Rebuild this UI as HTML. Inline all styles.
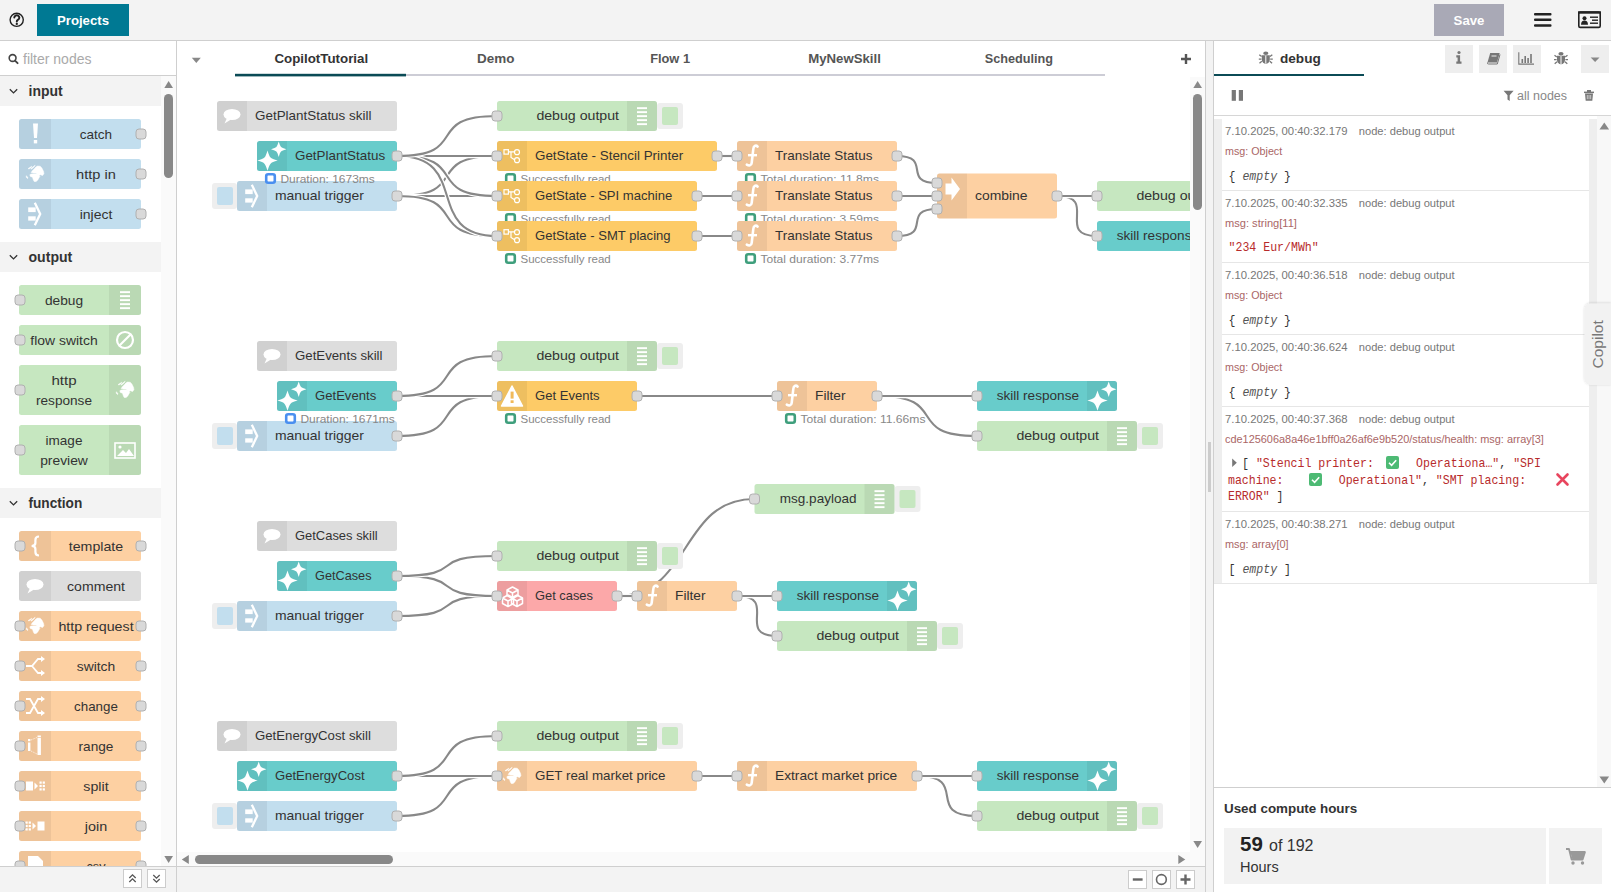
<!DOCTYPE html><html><head><meta charset="utf-8"><title>Flow editor</title><style>html,body{margin:0;padding:0;background:#fff;overflow:hidden}svg text{font-family:'Liberation Sans', sans-serif}</style></head><body>
<svg width="1611" height="892" viewBox="0 0 1611 892" style="display:block">
<rect x="0" y="0" width="1611" height="40" fill="#f3f3f3"/>
<rect x="0" y="40" width="1611" height="1" fill="#cfcfcf"/>
<circle cx="16.7" cy="19.8" r="6.6" fill="none" stroke="#222" stroke-width="1.4"/>
<path d="M14.3,17.6 a2.5,2.4 0 1 1 3.8,2.1 c-0.9,0.5 -1.3,0.9 -1.3,1.7" fill="none" stroke="#222" stroke-width="2" stroke-linecap="round"/><circle cx="16.8" cy="23.9" r="1.15" fill="#222"/>
<rect x="37" y="4" width="92" height="32" fill="#007993"/>
<text x="83" y="25" text-anchor="middle" font-size="13.2" font-weight="bold" fill="#fff"{TLW(51)}>Projects</text>
<rect x="1434" y="4" width="70" height="32" fill="#a9a9b6"/>
<text x="1469" y="25" text-anchor="middle" font-size="13.2" font-weight="bold" fill="#fff"{TLW(30.5)}>Save</text>
<rect x="1534" y="13" width="17.5" height="2.6" rx="1" fill="#222"/><rect x="1534" y="18.5" width="17.5" height="2.6" rx="1" fill="#222"/><rect x="1534" y="24.2" width="17.5" height="2.6" rx="1" fill="#222"/>
<rect x="1578.8" y="12" width="21.4" height="15.4" rx="1.5" fill="none" stroke="#222" stroke-width="1.6"/><rect x="1578" y="11.3" width="23" height="2.4" fill="#222"/>
<circle cx="1584.5" cy="18.3" r="2" fill="#222"/><path d="M1581,24.8 q0.2,-4.2 3.5,-4.2 q3.3,0 3.5,4.2z" fill="#222"/>
<rect x="1590" y="16.5" width="8" height="1.4" fill="#222"/><rect x="1592" y="19.5" width="6" height="1.4" fill="#222"/><rect x="1590" y="22.5" width="8" height="1.4" fill="#222"/>
<rect x="0" y="41" width="176" height="825" fill="#fff"/>
<rect x="0" y="75" width="176" height="1" fill="#cfcfcf"/>
<circle cx="12.6" cy="58" r="3.4" fill="none" stroke="#444" stroke-width="1.6"/><path d="M15,60.6 l2.6,2.6" stroke="#444" stroke-width="1.9" stroke-linecap="round"/>
<text x="23" y="64" font-size="14" fill="#aaaaaa">filter nodes</text>
<rect x="161" y="76" width="15" height="790" fill="#fafafa"/>
<path d="M164.3,88 l4.35,-7 l4.35,7z" fill="#888"/>
<rect x="164" y="94" width="9" height="84" rx="4.5" fill="#888"/>
<path d="M164.3,856 l4.35,7 l4.35,-7z" fill="#888"/>
<rect x="176" y="41" width="1" height="851" fill="#cfcfcf"/>
<rect x="0" y="76" width="161" height="30" fill="#f3f3f3"/>
<path d="M9.8,89.2 l3.7,3.7 l3.7,-3.7" fill="none" stroke="#333" stroke-width="1.3"/>
<text x="28.5" y="96" font-size="14" font-weight="bold" fill="#333" textLength="34.1" lengthAdjust="spacingAndGlyphs">input</text>
<rect x="0" y="242" width="161" height="30" fill="#f3f3f3"/>
<path d="M9.8,255.2 l3.7,3.7 l3.7,-3.7" fill="none" stroke="#333" stroke-width="1.3"/>
<text x="28.5" y="262" font-size="14" font-weight="bold" fill="#333" textLength="43.8" lengthAdjust="spacingAndGlyphs">output</text>
<rect x="0" y="488" width="161" height="30" fill="#f3f3f3"/>
<path d="M9.8,501.2 l3.7,3.7 l3.7,-3.7" fill="none" stroke="#333" stroke-width="1.3"/>
<text x="28.5" y="508" font-size="14" font-weight="bold" fill="#333" textLength="53.8" lengthAdjust="spacingAndGlyphs">function</text>
<svg x="0" y="76" width="161" height="790" overflow="hidden"><g transform="translate(0,-76)">
<rect x="19" y="119" width="122" height="30" rx="2.5" fill="#c2deee"/><path d="M51,119 h-29.5 a2.5,2.5 0 0 0 -2.5,2.5 v25 a2.5,2.5 0 0 0 2.5,2.5 h29.5 z" fill="#000" fill-opacity="0.06"/><svg x="20.0" y="119" width="30" height="30" overflow="hidden"><path d="M13,4.5 h5 l-1,14.5 h-3z" fill="#fff"/><rect x="13.8" y="21.0" width="3.4" height="3.4" fill="#fff"/></svg><text x="96.0" y="139.0" text-anchor="middle" font-size="13.6" fill="#333" textLength="32.3" lengthAdjust="spacingAndGlyphs">catch</text><rect x="136" y="129.0" width="10" height="10" rx="3" fill="#d9d9d9" stroke="#b0b0b0" stroke-width="1"/>
<rect x="19" y="159" width="122" height="30" rx="2.5" fill="#c2deee"/><path d="M51,159 h-29.5 a2.5,2.5 0 0 0 -2.5,2.5 v25 a2.5,2.5 0 0 0 2.5,2.5 h29.5 z" fill="#000" fill-opacity="0.06"/><svg x="20.0" y="159" width="30" height="30" overflow="hidden"><path transform="translate(0,0.0)" d="M11.1,13.5 L12.5,11.5 L14.1,10.1 L15.8,8.1 L17.5,7.1 L20.2,7.2 L21.9,9.1 L23.6,12.5 L23.9,14.8 L22.6,16.5 L20.2,15.8 L18.9,16.8 L17.5,15.2 L15.8,14.1 L13.5,14.1 Z M9.8,15.8 L11.1,15 L16.2,14.8 L18.2,15.8 L19.9,17.5 L18.9,18.9 L17.8,20.9 L16.2,22.6 L14.1,22.4 L13.1,20.2 L12.5,18.2 L10.4,17.5 Z M8.1,9.6 L11.8,7.2 L11,8.6 L9,10 Z M10.8,9.6 L15.2,6.2 L14,8 L11.6,10 Z M6.2,16.8 L7.8,18.2 L7.6,19.6 L6.4,18.4 Z" fill="#fff" stroke="#fff" stroke-width="0.5" stroke-linejoin="round"/></svg><text x="96.0" y="179.0" text-anchor="middle" font-size="13.6" fill="#333" textLength="39.8" lengthAdjust="spacingAndGlyphs">http in</text><rect x="136" y="169.0" width="10" height="10" rx="3" fill="#d9d9d9" stroke="#b0b0b0" stroke-width="1"/>
<rect x="19" y="199" width="122" height="30" rx="2.5" fill="#c2deee"/><path d="M51,199 h-29.5 a2.5,2.5 0 0 0 -2.5,2.5 v25 a2.5,2.5 0 0 0 2.5,2.5 h29.5 z" fill="#000" fill-opacity="0.06"/><svg x="20.0" y="199" width="30" height="30" overflow="hidden"><rect x="8.2" y="8.4" width="7.5" height="4.7" fill="#fff"/><rect x="8.2" y="17.3" width="7.5" height="4.3" fill="#fff"/><path d="M14.8,3.8 L20.2,15.0 L14.8,26.2" fill="none" stroke="#fff" stroke-width="2.3" stroke-linejoin="miter"/></svg><text x="96.0" y="219.0" text-anchor="middle" font-size="13.6" fill="#333" textLength="32.7" lengthAdjust="spacingAndGlyphs">inject</text><rect x="136" y="209.0" width="10" height="10" rx="3" fill="#d9d9d9" stroke="#b0b0b0" stroke-width="1"/>
<rect x="19" y="285" width="122" height="30" rx="2.5" fill="#c6e7c0"/><path d="M109,285 h29.5 a2.5,2.5 0 0 1 2.5,2.5 v25 a2.5,2.5 0 0 1 -2.5,2.5 h-29.5 z" fill="#000" fill-opacity="0.06"/><svg x="110.0" y="285" width="30" height="30" overflow="hidden"><rect x="10" y="6.2" width="10" height="1.9" fill="#fff"/><rect x="10" y="10.2" width="10" height="1.9" fill="#fff"/><rect x="10" y="14.2" width="10" height="1.9" fill="#fff"/><rect x="10" y="18.2" width="10" height="1.9" fill="#fff"/><rect x="10" y="22.2" width="10" height="1.9" fill="#fff"/></svg><text x="64.0" y="305.0" text-anchor="middle" font-size="13.6" fill="#333" textLength="38.2" lengthAdjust="spacingAndGlyphs">debug</text><rect x="15" y="295.0" width="10" height="10" rx="3" fill="#d9d9d9" stroke="#b0b0b0" stroke-width="1"/>
<rect x="19" y="325" width="122" height="30" rx="2.5" fill="#c6e7c0"/><path d="M109,325 h29.5 a2.5,2.5 0 0 1 2.5,2.5 v25 a2.5,2.5 0 0 1 -2.5,2.5 h-29.5 z" fill="#000" fill-opacity="0.06"/><svg x="110.0" y="325" width="30" height="30" overflow="hidden"><circle cx="15" cy="15.0" r="8" fill="none" stroke="#fff" stroke-width="2.2"/><path d="M9.5,20.5 L20.5,9.5" stroke="#fff" stroke-width="2.2"/></svg><text x="64.0" y="345.0" text-anchor="middle" font-size="13.6" fill="#333" textLength="67.3" lengthAdjust="spacingAndGlyphs">flow switch</text><rect x="15" y="335.0" width="10" height="10" rx="3" fill="#d9d9d9" stroke="#b0b0b0" stroke-width="1"/>
<rect x="19" y="365" width="122" height="50" rx="2.5" fill="#c6e7c0"/><path d="M109,365 h29.5 a2.5,2.5 0 0 1 2.5,2.5 v45 a2.5,2.5 0 0 1 -2.5,2.5 h-29.5 z" fill="#000" fill-opacity="0.06"/><svg x="110.0" y="365" width="30" height="50" overflow="hidden"><path transform="translate(0,10.0)" d="M11.1,13.5 L12.5,11.5 L14.1,10.1 L15.8,8.1 L17.5,7.1 L20.2,7.2 L21.9,9.1 L23.6,12.5 L23.9,14.8 L22.6,16.5 L20.2,15.8 L18.9,16.8 L17.5,15.2 L15.8,14.1 L13.5,14.1 Z M9.8,15.8 L11.1,15 L16.2,14.8 L18.2,15.8 L19.9,17.5 L18.9,18.9 L17.8,20.9 L16.2,22.6 L14.1,22.4 L13.1,20.2 L12.5,18.2 L10.4,17.5 Z M8.1,9.6 L11.8,7.2 L11,8.6 L9,10 Z M10.8,9.6 L15.2,6.2 L14,8 L11.6,10 Z M6.2,16.8 L7.8,18.2 L7.6,19.6 L6.4,18.4 Z" fill="#fff" stroke="#fff" stroke-width="0.5" stroke-linejoin="round"/></svg><text x="64.0" y="385.0" text-anchor="middle" font-size="13.6" fill="#333" textLength="25.2" lengthAdjust="spacingAndGlyphs">http</text><text x="64.0" y="405.0" text-anchor="middle" font-size="13.6" fill="#333" textLength="56.0" lengthAdjust="spacingAndGlyphs">response</text><rect x="15" y="385.0" width="10" height="10" rx="3" fill="#d9d9d9" stroke="#b0b0b0" stroke-width="1"/>
<rect x="19" y="425" width="122" height="50" rx="2.5" fill="#c6e7c0"/><path d="M109,425 h29.5 a2.5,2.5 0 0 1 2.5,2.5 v45 a2.5,2.5 0 0 1 -2.5,2.5 h-29.5 z" fill="#000" fill-opacity="0.06"/><svg x="110.0" y="425" width="30" height="50" overflow="hidden"><rect x="5" y="18.0" width="20" height="15" fill="none" stroke="#fff" stroke-width="1.6"/><path d="M7,31.0 l6,-6 l3,3 l3,-4 l5,7z" fill="#fff"/><circle cx="10" cy="22.0" r="1.6" fill="#fff"/></svg><text x="64.0" y="445.0" text-anchor="middle" font-size="13.6" fill="#333" textLength="36.9" lengthAdjust="spacingAndGlyphs">image</text><text x="64.0" y="465.0" text-anchor="middle" font-size="13.6" fill="#333" textLength="47.7" lengthAdjust="spacingAndGlyphs">preview</text><rect x="15" y="445.0" width="10" height="10" rx="3" fill="#d9d9d9" stroke="#b0b0b0" stroke-width="1"/>
<rect x="19" y="531" width="122" height="30" rx="2.5" fill="#fdd0a2"/><path d="M51,531 h-29.5 a2.5,2.5 0 0 0 -2.5,2.5 v25 a2.5,2.5 0 0 0 2.5,2.5 h29.5 z" fill="#000" fill-opacity="0.06"/><svg x="20.0" y="531" width="30" height="30" overflow="hidden"><path d="M19,5.5 q-3.6,0 -3.6,3.4 v3.2 q0,2.9 -3.8,2.9 q3.8,0 3.8,2.9 v3.2 q0,3.4 3.6,3.4" fill="none" stroke="#fff" stroke-width="2.2"/></svg><text x="96.0" y="551.0" text-anchor="middle" font-size="13.6" fill="#333" textLength="54.4" lengthAdjust="spacingAndGlyphs">template</text><rect x="15" y="541.0" width="10" height="10" rx="3" fill="#d9d9d9" stroke="#b0b0b0" stroke-width="1"/><rect x="136" y="541.0" width="10" height="10" rx="3" fill="#d9d9d9" stroke="#b0b0b0" stroke-width="1"/>
<rect x="19" y="571" width="122" height="30" rx="2.5" fill="#dddddd"/><path d="M51,571 h-29.5 a2.5,2.5 0 0 0 -2.5,2.5 v25 a2.5,2.5 0 0 0 2.5,2.5 h29.5 z" fill="#000" fill-opacity="0.06"/><svg x="20.0" y="571" width="30" height="30" overflow="hidden"><ellipse cx="15" cy="13.5" rx="8.5" ry="5.5" fill="#fff"/><path d="M10,17.0 L7.5,22.5 L14,18.5 z" fill="#fff"/></svg><text x="96.0" y="591.0" text-anchor="middle" font-size="13.6" fill="#333" textLength="58.0" lengthAdjust="spacingAndGlyphs">comment</text>
<rect x="19" y="611" width="122" height="30" rx="2.5" fill="#fdd0a2"/><path d="M51,611 h-29.5 a2.5,2.5 0 0 0 -2.5,2.5 v25 a2.5,2.5 0 0 0 2.5,2.5 h29.5 z" fill="#000" fill-opacity="0.06"/><svg x="20.0" y="611" width="30" height="30" overflow="hidden"><path transform="translate(0,0.0)" d="M11.1,13.5 L12.5,11.5 L14.1,10.1 L15.8,8.1 L17.5,7.1 L20.2,7.2 L21.9,9.1 L23.6,12.5 L23.9,14.8 L22.6,16.5 L20.2,15.8 L18.9,16.8 L17.5,15.2 L15.8,14.1 L13.5,14.1 Z M9.8,15.8 L11.1,15 L16.2,14.8 L18.2,15.8 L19.9,17.5 L18.9,18.9 L17.8,20.9 L16.2,22.6 L14.1,22.4 L13.1,20.2 L12.5,18.2 L10.4,17.5 Z M8.1,9.6 L11.8,7.2 L11,8.6 L9,10 Z M10.8,9.6 L15.2,6.2 L14,8 L11.6,10 Z M6.2,16.8 L7.8,18.2 L7.6,19.6 L6.4,18.4 Z" fill="#fff" stroke="#fff" stroke-width="0.5" stroke-linejoin="round"/></svg><text x="96.0" y="631.0" text-anchor="middle" font-size="13.6" fill="#333" textLength="75.2" lengthAdjust="spacingAndGlyphs">http request</text><rect x="15" y="621.0" width="10" height="10" rx="3" fill="#d9d9d9" stroke="#b0b0b0" stroke-width="1"/><rect x="136" y="621.0" width="10" height="10" rx="3" fill="#d9d9d9" stroke="#b0b0b0" stroke-width="1"/>
<rect x="19" y="651" width="122" height="30" rx="2.5" fill="#fdd0a2"/><path d="M51,651 h-29.5 a2.5,2.5 0 0 0 -2.5,2.5 v25 a2.5,2.5 0 0 0 2.5,2.5 h29.5 z" fill="#000" fill-opacity="0.06"/><svg x="20.0" y="651" width="30" height="30" overflow="hidden"><g fill="none" stroke="#fff" stroke-width="1.8"><path d="M6,15.0 h6 l6,-7 h3 M12,15.0 l6,7 h3"/></g><path d="M21,5.0 l4,3 l-4,3z M21,19.0 l4,3 l-4,3z" fill="#fff"/></svg><text x="96.0" y="671.0" text-anchor="middle" font-size="13.6" fill="#333" textLength="38.4" lengthAdjust="spacingAndGlyphs">switch</text><rect x="15" y="661.0" width="10" height="10" rx="3" fill="#d9d9d9" stroke="#b0b0b0" stroke-width="1"/><rect x="136" y="661.0" width="10" height="10" rx="3" fill="#d9d9d9" stroke="#b0b0b0" stroke-width="1"/>
<rect x="19" y="691" width="122" height="30" rx="2.5" fill="#fdd0a2"/><path d="M51,691 h-29.5 a2.5,2.5 0 0 0 -2.5,2.5 v25 a2.5,2.5 0 0 0 2.5,2.5 h29.5 z" fill="#000" fill-opacity="0.06"/><svg x="20.0" y="691" width="30" height="30" overflow="hidden"><g fill="none" stroke="#fff" stroke-width="1.8"><path d="M6,8.0 h4 l8,14 h4 M6,22.0 h4 l8,-14 h4"/></g><path d="M21,5.0 l4,3 l-4,3z M21,19.0 l4,3 l-4,3z" fill="#fff"/></svg><text x="96.0" y="711.0" text-anchor="middle" font-size="13.6" fill="#333" textLength="43.8" lengthAdjust="spacingAndGlyphs">change</text><rect x="15" y="701.0" width="10" height="10" rx="3" fill="#d9d9d9" stroke="#b0b0b0" stroke-width="1"/><rect x="136" y="701.0" width="10" height="10" rx="3" fill="#d9d9d9" stroke="#b0b0b0" stroke-width="1"/>
<rect x="19" y="731" width="122" height="30" rx="2.5" fill="#fdd0a2"/><path d="M51,731 h-29.5 a2.5,2.5 0 0 0 -2.5,2.5 v25 a2.5,2.5 0 0 0 2.5,2.5 h29.5 z" fill="#000" fill-opacity="0.06"/><svg x="20.0" y="731" width="30" height="30" overflow="hidden"><rect x="8" y="11.5" width="2.4" height="8.5" fill="#fff"/><rect x="8" y="8.0" width="2.4" height="2.2" fill="#fff"/><rect x="17.5" y="7.0" width="3.4" height="17" fill="#fff"/><rect x="17.5" y="4.5" width="3.4" height="1.8" fill="#fff"/><path d="M11,9.0 L17,6.5 M11,20.0 L17,23.0" stroke="#fff" stroke-width="0.8" stroke-dasharray="1.5,1" opacity=".8"/></svg><text x="96.0" y="751.0" text-anchor="middle" font-size="13.6" fill="#333" textLength="34.9" lengthAdjust="spacingAndGlyphs">range</text><rect x="15" y="741.0" width="10" height="10" rx="3" fill="#d9d9d9" stroke="#b0b0b0" stroke-width="1"/><rect x="136" y="741.0" width="10" height="10" rx="3" fill="#d9d9d9" stroke="#b0b0b0" stroke-width="1"/>
<rect x="19" y="771" width="122" height="30" rx="2.5" fill="#fdd0a2"/><path d="M51,771 h-29.5 a2.5,2.5 0 0 0 -2.5,2.5 v25 a2.5,2.5 0 0 0 2.5,2.5 h29.5 z" fill="#000" fill-opacity="0.06"/><svg x="20.0" y="771" width="30" height="30" overflow="hidden"><rect x="6" y="10.5" width="7" height="9" fill="#fff"/><path d="M14.5,11.5 l3.5,3.5 l-3.5,3.5z" fill="#fff"/><rect x="19.5" y="10.5" width="2.2" height="2.2" fill="#fff"/><rect x="19.5" y="13.9" width="2.2" height="2.2" fill="#fff"/><rect x="19.5" y="17.3" width="2.2" height="2.2" fill="#fff"/><rect x="22.7" y="10.5" width="2.2" height="2.2" fill="#fff"/><rect x="22.7" y="13.9" width="2.2" height="2.2" fill="#fff"/><rect x="22.7" y="17.3" width="2.2" height="2.2" fill="#fff"/></svg><text x="96.0" y="791.0" text-anchor="middle" font-size="13.6" fill="#333" textLength="25.3" lengthAdjust="spacingAndGlyphs">split</text><rect x="15" y="781.0" width="10" height="10" rx="3" fill="#d9d9d9" stroke="#b0b0b0" stroke-width="1"/><rect x="136" y="781.0" width="10" height="10" rx="3" fill="#d9d9d9" stroke="#b0b0b0" stroke-width="1"/>
<rect x="19" y="811" width="122" height="30" rx="2.5" fill="#fdd0a2"/><path d="M51,811 h-29.5 a2.5,2.5 0 0 0 -2.5,2.5 v25 a2.5,2.5 0 0 0 2.5,2.5 h29.5 z" fill="#000" fill-opacity="0.06"/><svg x="20.0" y="811" width="30" height="30" overflow="hidden"><rect x="5.5" y="10.5" width="2.2" height="2.2" fill="#fff"/><rect x="5.5" y="13.9" width="2.2" height="2.2" fill="#fff"/><rect x="5.5" y="17.3" width="2.2" height="2.2" fill="#fff"/><rect x="8.7" y="10.5" width="2.2" height="2.2" fill="#fff"/><rect x="8.7" y="13.9" width="2.2" height="2.2" fill="#fff"/><rect x="8.7" y="17.3" width="2.2" height="2.2" fill="#fff"/><path d="M12.5,11.5 l3.5,3.5 l-3.5,3.5z" fill="#fff"/><rect x="17.5" y="10.5" width="7" height="9" fill="#fff"/></svg><text x="96.0" y="831.0" text-anchor="middle" font-size="13.6" fill="#333" textLength="22.4" lengthAdjust="spacingAndGlyphs">join</text><rect x="15" y="821.0" width="10" height="10" rx="3" fill="#d9d9d9" stroke="#b0b0b0" stroke-width="1"/><rect x="136" y="821.0" width="10" height="10" rx="3" fill="#d9d9d9" stroke="#b0b0b0" stroke-width="1"/>
<rect x="19" y="851" width="122" height="30" rx="2.5" fill="#fdd0a2"/><path d="M51,851 h-29.5 a2.5,2.5 0 0 0 -2.5,2.5 v25 a2.5,2.5 0 0 0 2.5,2.5 h29.5 z" fill="#000" fill-opacity="0.06"/><svg x="20.0" y="851" width="30" height="30" overflow="hidden"><path d="M8,5.0 h10 l5,5 v15 h-15z" fill="#fff"/></svg><text x="96.0" y="871.0" text-anchor="middle" font-size="13.6" fill="#333" textLength="18.9" lengthAdjust="spacingAndGlyphs">csv</text><rect x="15" y="861.0" width="10" height="10" rx="3" fill="#d9d9d9" stroke="#b0b0b0" stroke-width="1"/><rect x="136" y="861.0" width="10" height="10" rx="3" fill="#d9d9d9" stroke="#b0b0b0" stroke-width="1"/>
</g></svg>
<rect x="0" y="866" width="176" height="26" fill="#f3f3f3"/><rect x="0" y="866" width="176" height="1" fill="#cfcfcf"/>
<rect x="123.5" y="869.5" width="18" height="18" fill="#fff" stroke="#ccc"/><rect x="147.5" y="869.5" width="18" height="18" fill="#fff" stroke="#ccc"/>
<path d="M129.3,878 l3.2,-3.2 l3.2,3.2 M129.3,882 l3.2,-3.2 l3.2,3.2" fill="none" stroke="#555" stroke-width="1.3"/>
<path d="M153.3,875 l3.2,3.2 l3.2,-3.2 M153.3,879 l3.2,3.2 l3.2,-3.2" fill="none" stroke="#555" stroke-width="1.3"/>
<rect x="177" y="41" width="1028" height="825" fill="#fff"/>
<path d="M191.8,57.7 h9 l-4.5,5.4z" fill="#888"/>
<rect x="235" y="74" width="870" height="2" fill="#cdcdd6"/>
<rect x="235" y="73.8" width="171" height="2.6" fill="#0b4b56"/>
<text x="321.3" y="63" text-anchor="middle" font-size="13.3" font-weight="bold" fill="#333" textLength="93.7" lengthAdjust="spacingAndGlyphs">CopilotTutorial</text>
<text x="495.70000000000005" y="63" text-anchor="middle" font-size="13.3" font-weight="bold" fill="#555" textLength="37.4" lengthAdjust="spacingAndGlyphs">Demo</text>
<text x="670.1" y="63" text-anchor="middle" font-size="13.3" font-weight="bold" fill="#555" textLength="39.9" lengthAdjust="spacingAndGlyphs">Flow 1</text>
<text x="844.5" y="63" text-anchor="middle" font-size="13.3" font-weight="bold" fill="#555" textLength="72.7" lengthAdjust="spacingAndGlyphs">MyNewSkill</text>
<text x="1018.9000000000001" y="63" text-anchor="middle" font-size="13.3" font-weight="bold" fill="#555" textLength="68.4" lengthAdjust="spacingAndGlyphs">Scheduling</text>
<path d="M1181,59 h10 M1186,54 v10" stroke="#555" stroke-width="2.4"/>
<svg x="177" y="77" width="1013" height="775" overflow="hidden"><g transform="translate(-177,-77)">
<path d="M397,196.0 C472.0,196.0 422.0,156.0 497,156.0" fill="none" stroke="#fff" stroke-width="4.5"/><path d="M397,196.0 C472.0,196.0 422.0,156.0 497,156.0" fill="none" stroke="#888" stroke-width="2.1"/>
<path d="M397,196.0 C472.0,196.0 422.0,196.0 497,196.0" fill="none" stroke="#fff" stroke-width="4.5"/><path d="M397,196.0 C472.0,196.0 422.0,196.0 497,196.0" fill="none" stroke="#888" stroke-width="2.1"/>
<path d="M397,196.0 C472.0,196.0 422.0,236.0 497,236.0" fill="none" stroke="#fff" stroke-width="4.5"/><path d="M397,196.0 C472.0,196.0 422.0,236.0 497,236.0" fill="none" stroke="#888" stroke-width="2.1"/>
<path d="M397,156.0 C472.0,156.0 422.0,156.0 497,156.0" fill="none" stroke="#fff" stroke-width="4.5"/><path d="M397,156.0 C472.0,156.0 422.0,156.0 497,156.0" fill="none" stroke="#888" stroke-width="2.1"/>
<path d="M397,156.0 C472.0,156.0 422.0,196.0 497,196.0" fill="none" stroke="#fff" stroke-width="4.5"/><path d="M397,156.0 C472.0,156.0 422.0,196.0 497,196.0" fill="none" stroke="#888" stroke-width="2.1"/>
<path d="M397,156.0 C472.0,156.0 422.0,236.0 497,236.0" fill="none" stroke="#fff" stroke-width="4.5"/><path d="M397,156.0 C472.0,156.0 422.0,236.0 497,236.0" fill="none" stroke="#888" stroke-width="2.1"/>
<path d="M397,156.0 C472.0,156.0 422.0,116.0 497,116.0" fill="none" stroke="#fff" stroke-width="4.5"/><path d="M397,156.0 C472.0,156.0 422.0,116.0 497,116.0" fill="none" stroke="#888" stroke-width="2.1"/>
<path d="M717,156.0 C732.0,156.0 722.0,156.0 737,156.0" fill="none" stroke="#fff" stroke-width="4.5"/><path d="M717,156.0 C732.0,156.0 722.0,156.0 737,156.0" fill="none" stroke="#888" stroke-width="2.1"/>
<path d="M697,196.0 C727.0,196.0 707.0,196.0 737,196.0" fill="none" stroke="#fff" stroke-width="4.5"/><path d="M697,196.0 C727.0,196.0 707.0,196.0 737,196.0" fill="none" stroke="#888" stroke-width="2.1"/>
<path d="M697,236.0 C727.0,236.0 707.0,236.0 737,236.0" fill="none" stroke="#fff" stroke-width="4.5"/><path d="M697,236.0 C727.0,236.0 707.0,236.0 737,236.0" fill="none" stroke="#888" stroke-width="2.1"/>
<path d="M897,156.0 C933.194785536041,156.0 900.805214463959,183.0 937,183.0" fill="none" stroke="#fff" stroke-width="4.5"/><path d="M897,156.0 C933.194785536041,156.0 900.805214463959,183.0 937,183.0" fill="none" stroke="#888" stroke-width="2.1"/>
<path d="M897,196.0 C927.0,196.0 907.0,196.0 937,196.0" fill="none" stroke="#fff" stroke-width="4.5"/><path d="M897,196.0 C927.0,196.0 907.0,196.0 937,196.0" fill="none" stroke="#888" stroke-width="2.1"/>
<path d="M897,236.0 C933.194785536041,236.0 900.805214463959,209.0 937,209.0" fill="none" stroke="#fff" stroke-width="4.5"/><path d="M897,236.0 C933.194785536041,236.0 900.805214463959,209.0 937,209.0" fill="none" stroke="#888" stroke-width="2.1"/>
<path d="M1057,196.0 C1099.4264068711927,196.0 1054.5735931288073,236.0 1097,236.0" fill="none" stroke="#fff" stroke-width="4.5"/><path d="M1057,196.0 C1099.4264068711927,196.0 1054.5735931288073,236.0 1097,236.0" fill="none" stroke="#888" stroke-width="2.1"/>
<path d="M1057,196.0 C1087.0,196.0 1067.0,196.0 1097,196.0" fill="none" stroke="#fff" stroke-width="4.5"/><path d="M1057,196.0 C1087.0,196.0 1067.0,196.0 1097,196.0" fill="none" stroke="#888" stroke-width="2.1"/>
<path d="M397,436.0 C472.0,436.0 422.0,396.0 497,396.0" fill="none" stroke="#fff" stroke-width="4.5"/><path d="M397,436.0 C472.0,436.0 422.0,396.0 497,396.0" fill="none" stroke="#888" stroke-width="2.1"/>
<path d="M397,396.0 C472.0,396.0 422.0,396.0 497,396.0" fill="none" stroke="#fff" stroke-width="4.5"/><path d="M397,396.0 C472.0,396.0 422.0,396.0 497,396.0" fill="none" stroke="#888" stroke-width="2.1"/>
<path d="M397,396.0 C472.0,396.0 422.0,356.0 497,356.0" fill="none" stroke="#fff" stroke-width="4.5"/><path d="M397,396.0 C472.0,396.0 422.0,356.0 497,356.0" fill="none" stroke="#888" stroke-width="2.1"/>
<path d="M637,396.0 C712.0,396.0 702.0,396.0 777,396.0" fill="none" stroke="#fff" stroke-width="4.5"/><path d="M637,396.0 C712.0,396.0 702.0,396.0 777,396.0" fill="none" stroke="#888" stroke-width="2.1"/>
<path d="M877,396.0 C952.0,396.0 902.0,436.0 977,436.0" fill="none" stroke="#fff" stroke-width="4.5"/><path d="M877,396.0 C952.0,396.0 902.0,436.0 977,436.0" fill="none" stroke="#888" stroke-width="2.1"/>
<path d="M877,396.0 C952.0,396.0 902.0,396.0 977,396.0" fill="none" stroke="#fff" stroke-width="4.5"/><path d="M877,396.0 C952.0,396.0 902.0,396.0 977,396.0" fill="none" stroke="#888" stroke-width="2.1"/>
<path d="M397,616.0 C472.0,616.0 422.0,596.0 497,596.0" fill="none" stroke="#fff" stroke-width="4.5"/><path d="M397,616.0 C472.0,616.0 422.0,596.0 497,596.0" fill="none" stroke="#888" stroke-width="2.1"/>
<path d="M397,576.0 C472.0,576.0 422.0,596.0 497,596.0" fill="none" stroke="#fff" stroke-width="4.5"/><path d="M397,576.0 C472.0,576.0 422.0,596.0 497,596.0" fill="none" stroke="#888" stroke-width="2.1"/>
<path d="M397,576.0 C472.0,576.0 422.0,556.0 497,556.0" fill="none" stroke="#fff" stroke-width="4.5"/><path d="M397,576.0 C472.0,576.0 422.0,556.0 497,556.0" fill="none" stroke="#888" stroke-width="2.1"/>
<path d="M617,596.0 C692.0,596.0 679.5,499.0 754.5,499.0" fill="none" stroke="#fff" stroke-width="4.5"/><path d="M617,596.0 C692.0,596.0 679.5,499.0 754.5,499.0" fill="none" stroke="#888" stroke-width="2.1"/>
<path d="M617,596.0 C632.0,596.0 622.0,596.0 637,596.0" fill="none" stroke="#fff" stroke-width="4.5"/><path d="M617,596.0 C632.0,596.0 622.0,596.0 637,596.0" fill="none" stroke="#888" stroke-width="2.1"/>
<path d="M737,596.0 C779.4264068711929,596.0 734.5735931288071,636.0 777,636.0" fill="none" stroke="#fff" stroke-width="4.5"/><path d="M737,596.0 C779.4264068711929,596.0 734.5735931288071,636.0 777,636.0" fill="none" stroke="#888" stroke-width="2.1"/>
<path d="M737,596.0 C767.0,596.0 747.0,596.0 777,596.0" fill="none" stroke="#fff" stroke-width="4.5"/><path d="M737,596.0 C767.0,596.0 747.0,596.0 777,596.0" fill="none" stroke="#888" stroke-width="2.1"/>
<path d="M397,816.0 C472.0,816.0 422.0,776.0 497,776.0" fill="none" stroke="#fff" stroke-width="4.5"/><path d="M397,816.0 C472.0,816.0 422.0,776.0 497,776.0" fill="none" stroke="#888" stroke-width="2.1"/>
<path d="M397,776.0 C472.0,776.0 422.0,776.0 497,776.0" fill="none" stroke="#fff" stroke-width="4.5"/><path d="M397,776.0 C472.0,776.0 422.0,776.0 497,776.0" fill="none" stroke="#888" stroke-width="2.1"/>
<path d="M397,776.0 C472.0,776.0 422.0,736.0 497,736.0" fill="none" stroke="#fff" stroke-width="4.5"/><path d="M397,776.0 C472.0,776.0 422.0,736.0 497,736.0" fill="none" stroke="#888" stroke-width="2.1"/>
<path d="M697,776.0 C727.0,776.0 707.0,776.0 737,776.0" fill="none" stroke="#fff" stroke-width="4.5"/><path d="M697,776.0 C727.0,776.0 707.0,776.0 737,776.0" fill="none" stroke="#888" stroke-width="2.1"/>
<path d="M917,776.0 C971.0832691319598,776.0 922.9167308680402,816.0 977,816.0" fill="none" stroke="#fff" stroke-width="4.5"/><path d="M917,776.0 C971.0832691319598,776.0 922.9167308680402,816.0 977,816.0" fill="none" stroke="#888" stroke-width="2.1"/>
<path d="M917,776.0 C962.0,776.0 932.0,776.0 977,776.0" fill="none" stroke="#fff" stroke-width="4.5"/><path d="M917,776.0 C962.0,776.0 932.0,776.0 977,776.0" fill="none" stroke="#888" stroke-width="2.1"/>
<rect x="217" y="101" width="180" height="30" rx="2.5" fill="#dddddd"/><path d="M247,101 h-27.5 a2.5,2.5 0 0 0 -2.5,2.5 v25 a2.5,2.5 0 0 0 2.5,2.5 h27.5 z" fill="#000" fill-opacity="0.06"/><svg x="217.0" y="101" width="30" height="30" overflow="hidden"><ellipse cx="15" cy="13.5" rx="8.5" ry="5.5" fill="#fff"/><path d="M10,17 L7.5,22.5 L14,18.5 z" fill="#fff"/></svg><text x="255" y="120.4" font-size="13.6" fill="#333" textLength="116.4" lengthAdjust="spacingAndGlyphs">GetPlantStatus skill</text>
<rect x="212" y="183" width="25" height="26" rx="3" fill="#eeeeee"/><rect x="217" y="187" width="16" height="18" rx="2" fill="#c2deee"/><rect x="237" y="181" width="160" height="30" rx="2.5" fill="#c2deee"/><path d="M267,181 h-27.5 a2.5,2.5 0 0 0 -2.5,2.5 v25 a2.5,2.5 0 0 0 2.5,2.5 h27.5 z" fill="#000" fill-opacity="0.06"/><svg x="237.0" y="181" width="30" height="30" overflow="hidden"><rect x="8.2" y="8.4" width="7.5" height="4.7" fill="#fff"/><rect x="8.2" y="17.3" width="7.5" height="4.3" fill="#fff"/><path d="M14.8,3.8 L20.2,15 L14.8,26.2" fill="none" stroke="#fff" stroke-width="2.3" stroke-linejoin="miter"/></svg><text x="275" y="200.4" font-size="13.6" fill="#333" textLength="89.0" lengthAdjust="spacingAndGlyphs">manual trigger</text><rect x="392" y="191.0" width="10" height="10" rx="3" fill="#d9d9d9" stroke="#b0b0b0" stroke-width="1"/>
<rect x="257" y="141" width="140" height="30" rx="2.5" fill="#68cccb"/><path d="M287,141 h-27.5 a2.5,2.5 0 0 0 -2.5,2.5 v25 a2.5,2.5 0 0 0 2.5,2.5 h27.5 z" fill="#000" fill-opacity="0.06"/><svg x="257.0" y="141" width="30" height="30" overflow="hidden"><path d="M10.50,9.40 Q12.18,15.16 13.56,16.54 Q14.94,17.92 20.70,19.60 Q14.94,21.28 13.56,22.66 Q12.18,24.04 10.50,29.80 Q8.82,24.04 7.44,22.66 Q6.06,21.28 0.30,19.60 Q6.06,17.92 7.44,16.54 Q8.82,15.16 10.50,9.40 Z" fill="#fff"/><path d="M21.70,0.60 Q22.97,4.95 24.01,5.99 Q25.05,7.03 29.40,8.30 Q25.05,9.57 24.01,10.61 Q22.97,11.65 21.70,16.00 Q20.43,11.65 19.39,10.61 Q18.35,9.57 14.00,8.30 Q18.35,7.03 19.39,5.99 Q20.43,4.95 21.70,0.60 Z" fill="#fff"/></svg><text x="295" y="160.4" font-size="13.6" fill="#333" textLength="90.1" lengthAdjust="spacingAndGlyphs">GetPlantStatus</text><rect x="392" y="151.0" width="10" height="10" rx="3" fill="#d9d9d9" stroke="#b0b0b0" stroke-width="1"/><rect x="266.2" y="174.2" width="8.6" height="8.6" rx="2" fill="#fff" stroke="#4a8ff0" stroke-width="2.6"/><text x="280.5" y="183" font-size="11.5" fill="#888" textLength="94.2" lengthAdjust="spacingAndGlyphs">Duration: 1673ms</text>
<rect x="657" y="103" width="26" height="26" rx="3" fill="#eeeeee"/><rect x="662" y="107" width="16" height="18" rx="2" fill="#c6e7c0"/><rect x="497" y="101" width="160" height="30" rx="2.5" fill="#c6e7c0"/><path d="M627,101 h27.5 a2.5,2.5 0 0 1 2.5,2.5 v25 a2.5,2.5 0 0 1 -2.5,2.5 h-27.5 z" fill="#000" fill-opacity="0.06"/><svg x="627.0" y="101" width="30" height="30" overflow="hidden"><rect x="10" y="6.2" width="10" height="1.9" fill="#fff"/><rect x="10" y="10.2" width="10" height="1.9" fill="#fff"/><rect x="10" y="14.2" width="10" height="1.9" fill="#fff"/><rect x="10" y="18.2" width="10" height="1.9" fill="#fff"/><rect x="10" y="22.2" width="10" height="1.9" fill="#fff"/></svg><text x="619" y="120.4" text-anchor="end" font-size="13.6" fill="#333" textLength="82.6" lengthAdjust="spacingAndGlyphs">debug output</text><rect x="492" y="111.0" width="10" height="10" rx="3" fill="#d9d9d9" stroke="#b0b0b0" stroke-width="1"/>
<rect x="497" y="141" width="220" height="30" rx="2.5" fill="#fdcb67"/><path d="M527,141 h-27.5 a2.5,2.5 0 0 0 -2.5,2.5 v25 a2.5,2.5 0 0 0 2.5,2.5 h27.5 z" fill="#000" fill-opacity="0.06"/><svg x="497.0" y="141" width="30" height="30" overflow="hidden"><g fill="none" stroke="#fff" stroke-width="1.2"><rect x="7" y="8.7" width="4.4" height="4.4"/><circle cx="20" cy="11.2" r="2.5"/><circle cx="20" cy="19.2" r="2.5"/><path d="M11.4,10.9 h6.1 M14,10.9 v5.5 l3.6,2.4"/></g></svg><text x="535" y="160.4" font-size="13.6" fill="#333" textLength="148.1" lengthAdjust="spacingAndGlyphs">GetState - Stencil Printer</text><rect x="492" y="151.0" width="10" height="10" rx="3" fill="#d9d9d9" stroke="#b0b0b0" stroke-width="1"/><rect x="712" y="151.0" width="10" height="10" rx="3" fill="#d9d9d9" stroke="#b0b0b0" stroke-width="1"/><rect x="506.2" y="174.2" width="8.6" height="8.6" rx="2" fill="#fff" stroke="#3f9f7d" stroke-width="2.6"/><text x="520.5" y="183" font-size="11.5" fill="#888" textLength="90.2" lengthAdjust="spacingAndGlyphs">Successfully read</text>
<rect x="497" y="181" width="200" height="30" rx="2.5" fill="#fdcb67"/><path d="M527,181 h-27.5 a2.5,2.5 0 0 0 -2.5,2.5 v25 a2.5,2.5 0 0 0 2.5,2.5 h27.5 z" fill="#000" fill-opacity="0.06"/><svg x="497.0" y="181" width="30" height="30" overflow="hidden"><g fill="none" stroke="#fff" stroke-width="1.2"><rect x="7" y="8.7" width="4.4" height="4.4"/><circle cx="20" cy="11.2" r="2.5"/><circle cx="20" cy="19.2" r="2.5"/><path d="M11.4,10.9 h6.1 M14,10.9 v5.5 l3.6,2.4"/></g></svg><text x="535" y="200.4" font-size="13.6" fill="#333" textLength="137.2" lengthAdjust="spacingAndGlyphs">GetState - SPI machine</text><rect x="492" y="191.0" width="10" height="10" rx="3" fill="#d9d9d9" stroke="#b0b0b0" stroke-width="1"/><rect x="692" y="191.0" width="10" height="10" rx="3" fill="#d9d9d9" stroke="#b0b0b0" stroke-width="1"/><rect x="506.2" y="214.2" width="8.6" height="8.6" rx="2" fill="#fff" stroke="#3f9f7d" stroke-width="2.6"/><text x="520.5" y="223" font-size="11.5" fill="#888" textLength="90.2" lengthAdjust="spacingAndGlyphs">Successfully read</text>
<rect x="497" y="221" width="200" height="30" rx="2.5" fill="#fdcb67"/><path d="M527,221 h-27.5 a2.5,2.5 0 0 0 -2.5,2.5 v25 a2.5,2.5 0 0 0 2.5,2.5 h27.5 z" fill="#000" fill-opacity="0.06"/><svg x="497.0" y="221" width="30" height="30" overflow="hidden"><g fill="none" stroke="#fff" stroke-width="1.2"><rect x="7" y="8.7" width="4.4" height="4.4"/><circle cx="20" cy="11.2" r="2.5"/><circle cx="20" cy="19.2" r="2.5"/><path d="M11.4,10.9 h6.1 M14,10.9 v5.5 l3.6,2.4"/></g></svg><text x="535" y="240.4" font-size="13.6" fill="#333" textLength="135.6" lengthAdjust="spacingAndGlyphs">GetState - SMT placing</text><rect x="492" y="231.0" width="10" height="10" rx="3" fill="#d9d9d9" stroke="#b0b0b0" stroke-width="1"/><rect x="692" y="231.0" width="10" height="10" rx="3" fill="#d9d9d9" stroke="#b0b0b0" stroke-width="1"/><rect x="506.2" y="254.2" width="8.6" height="8.6" rx="2" fill="#fff" stroke="#3f9f7d" stroke-width="2.6"/><text x="520.5" y="263" font-size="11.5" fill="#888" textLength="90.2" lengthAdjust="spacingAndGlyphs">Successfully read</text>
<rect x="737" y="141" width="160" height="30" rx="2.5" fill="#fdd0a2"/><path d="M767,141 h-27.5 a2.5,2.5 0 0 0 -2.5,2.5 v25 a2.5,2.5 0 0 0 2.5,2.5 h27.5 z" fill="#000" fill-opacity="0.06"/><svg x="737.0" y="141" width="30" height="30" overflow="hidden"><path d="M20.6,5.6 C18.8,3.6 16.6,4.8 16.3,8 L14.7,21.8 C14.4,24.8 12,25 9.8,23.6" fill="none" stroke="#fff" stroke-width="2.6" stroke-linecap="round"/><path d="M11,14.2 h9" stroke="#fff" stroke-width="2.4" stroke-linecap="butt"/></svg><text x="775" y="160.4" font-size="13.6" fill="#333" textLength="97.5" lengthAdjust="spacingAndGlyphs">Translate Status</text><rect x="732" y="151.0" width="10" height="10" rx="3" fill="#d9d9d9" stroke="#b0b0b0" stroke-width="1"/><rect x="892" y="151.0" width="10" height="10" rx="3" fill="#d9d9d9" stroke="#b0b0b0" stroke-width="1"/><rect x="746.2" y="174.2" width="8.6" height="8.6" rx="2" fill="#fff" stroke="#3f9f7d" stroke-width="2.6"/><text x="760.5" y="183" font-size="11.5" fill="#888" textLength="118.5" lengthAdjust="spacingAndGlyphs">Total duration: 11.8ms</text>
<rect x="737" y="181" width="160" height="30" rx="2.5" fill="#fdd0a2"/><path d="M767,181 h-27.5 a2.5,2.5 0 0 0 -2.5,2.5 v25 a2.5,2.5 0 0 0 2.5,2.5 h27.5 z" fill="#000" fill-opacity="0.06"/><svg x="737.0" y="181" width="30" height="30" overflow="hidden"><path d="M20.6,5.6 C18.8,3.6 16.6,4.8 16.3,8 L14.7,21.8 C14.4,24.8 12,25 9.8,23.6" fill="none" stroke="#fff" stroke-width="2.6" stroke-linecap="round"/><path d="M11,14.2 h9" stroke="#fff" stroke-width="2.4" stroke-linecap="butt"/></svg><text x="775" y="200.4" font-size="13.6" fill="#333" textLength="97.5" lengthAdjust="spacingAndGlyphs">Translate Status</text><rect x="732" y="191.0" width="10" height="10" rx="3" fill="#d9d9d9" stroke="#b0b0b0" stroke-width="1"/><rect x="892" y="191.0" width="10" height="10" rx="3" fill="#d9d9d9" stroke="#b0b0b0" stroke-width="1"/><rect x="746.2" y="214.2" width="8.6" height="8.6" rx="2" fill="#fff" stroke="#3f9f7d" stroke-width="2.6"/><text x="760.5" y="223" font-size="11.5" fill="#888" textLength="118.5" lengthAdjust="spacingAndGlyphs">Total duration: 3.59ms</text>
<rect x="737" y="221" width="160" height="30" rx="2.5" fill="#fdd0a2"/><path d="M767,221 h-27.5 a2.5,2.5 0 0 0 -2.5,2.5 v25 a2.5,2.5 0 0 0 2.5,2.5 h27.5 z" fill="#000" fill-opacity="0.06"/><svg x="737.0" y="221" width="30" height="30" overflow="hidden"><path d="M20.6,5.6 C18.8,3.6 16.6,4.8 16.3,8 L14.7,21.8 C14.4,24.8 12,25 9.8,23.6" fill="none" stroke="#fff" stroke-width="2.6" stroke-linecap="round"/><path d="M11,14.2 h9" stroke="#fff" stroke-width="2.4" stroke-linecap="butt"/></svg><text x="775" y="240.4" font-size="13.6" fill="#333" textLength="97.5" lengthAdjust="spacingAndGlyphs">Translate Status</text><rect x="732" y="231.0" width="10" height="10" rx="3" fill="#d9d9d9" stroke="#b0b0b0" stroke-width="1"/><rect x="892" y="231.0" width="10" height="10" rx="3" fill="#d9d9d9" stroke="#b0b0b0" stroke-width="1"/><rect x="746.2" y="254.2" width="8.6" height="8.6" rx="2" fill="#fff" stroke="#3f9f7d" stroke-width="2.6"/><text x="760.5" y="263" font-size="11.5" fill="#888" textLength="118.5" lengthAdjust="spacingAndGlyphs">Total duration: 3.77ms</text>
<rect x="937" y="173.5" width="120" height="45" rx="2.5" fill="#fdd0a2"/><path d="M967,173.5 h-27.5 a2.5,2.5 0 0 0 -2.5,2.5 v40 a2.5,2.5 0 0 0 2.5,2.5 h27.5 z" fill="#000" fill-opacity="0.06"/><svg x="937.0" y="173.5" width="30" height="45" overflow="hidden"><path d="M8.5,10 h6 v-6 l8.5,11.5 l-8.5,11.5 v-6 h-6 z" fill="#fff"/></svg><text x="975" y="200.4" font-size="13.6" fill="#333" textLength="52.6" lengthAdjust="spacingAndGlyphs">combine</text><rect x="932" y="178.0" width="10" height="10" rx="3" fill="#d9d9d9" stroke="#b0b0b0" stroke-width="1"/><rect x="932" y="191.0" width="10" height="10" rx="3" fill="#d9d9d9" stroke="#b0b0b0" stroke-width="1"/><rect x="932" y="204.0" width="10" height="10" rx="3" fill="#d9d9d9" stroke="#b0b0b0" stroke-width="1"/><rect x="1052" y="191.0" width="10" height="10" rx="3" fill="#d9d9d9" stroke="#b0b0b0" stroke-width="1"/>
<rect x="1257" y="183" width="26" height="26" rx="3" fill="#eeeeee"/><rect x="1262" y="187" width="16" height="18" rx="2" fill="#c6e7c0"/><rect x="1097" y="181" width="160" height="30" rx="2.5" fill="#c6e7c0"/><path d="M1227,181 h27.5 a2.5,2.5 0 0 1 2.5,2.5 v25 a2.5,2.5 0 0 1 -2.5,2.5 h-27.5 z" fill="#000" fill-opacity="0.06"/><svg x="1227.0" y="181" width="30" height="30" overflow="hidden"><rect x="10" y="6.2" width="10" height="1.9" fill="#fff"/><rect x="10" y="10.2" width="10" height="1.9" fill="#fff"/><rect x="10" y="14.2" width="10" height="1.9" fill="#fff"/><rect x="10" y="18.2" width="10" height="1.9" fill="#fff"/><rect x="10" y="22.2" width="10" height="1.9" fill="#fff"/></svg><text x="1219" y="200.4" text-anchor="end" font-size="13.6" fill="#333" textLength="82.6" lengthAdjust="spacingAndGlyphs">debug output</text><rect x="1092" y="191.0" width="10" height="10" rx="3" fill="#d9d9d9" stroke="#b0b0b0" stroke-width="1"/>
<rect x="1097" y="221" width="140" height="30" rx="2.5" fill="#68cccb"/><path d="M1207,221 h27.5 a2.5,2.5 0 0 1 2.5,2.5 v25 a2.5,2.5 0 0 1 -2.5,2.5 h-27.5 z" fill="#000" fill-opacity="0.06"/><svg x="1207.0" y="221" width="30" height="30" overflow="hidden"><path d="M10.50,9.40 Q12.18,15.16 13.56,16.54 Q14.94,17.92 20.70,19.60 Q14.94,21.28 13.56,22.66 Q12.18,24.04 10.50,29.80 Q8.82,24.04 7.44,22.66 Q6.06,21.28 0.30,19.60 Q6.06,17.92 7.44,16.54 Q8.82,15.16 10.50,9.40 Z" fill="#fff"/><path d="M21.70,0.60 Q22.97,4.95 24.01,5.99 Q25.05,7.03 29.40,8.30 Q25.05,9.57 24.01,10.61 Q22.97,11.65 21.70,16.00 Q20.43,11.65 19.39,10.61 Q18.35,9.57 14.00,8.30 Q18.35,7.03 19.39,5.99 Q20.43,4.95 21.70,0.60 Z" fill="#fff"/></svg><text x="1199" y="240.4" text-anchor="end" font-size="13.6" fill="#333" textLength="82.3" lengthAdjust="spacingAndGlyphs">skill response</text><rect x="1092" y="231.0" width="10" height="10" rx="3" fill="#d9d9d9" stroke="#b0b0b0" stroke-width="1"/>
<rect x="257" y="341" width="140" height="30" rx="2.5" fill="#dddddd"/><path d="M287,341 h-27.5 a2.5,2.5 0 0 0 -2.5,2.5 v25 a2.5,2.5 0 0 0 2.5,2.5 h27.5 z" fill="#000" fill-opacity="0.06"/><svg x="257.0" y="341" width="30" height="30" overflow="hidden"><ellipse cx="15" cy="13.5" rx="8.5" ry="5.5" fill="#fff"/><path d="M10,17 L7.5,22.5 L14,18.5 z" fill="#fff"/></svg><text x="295" y="360.4" font-size="13.6" fill="#333" textLength="87.5" lengthAdjust="spacingAndGlyphs">GetEvents skill</text>
<rect x="212" y="423" width="25" height="26" rx="3" fill="#eeeeee"/><rect x="217" y="427" width="16" height="18" rx="2" fill="#c2deee"/><rect x="237" y="421" width="160" height="30" rx="2.5" fill="#c2deee"/><path d="M267,421 h-27.5 a2.5,2.5 0 0 0 -2.5,2.5 v25 a2.5,2.5 0 0 0 2.5,2.5 h27.5 z" fill="#000" fill-opacity="0.06"/><svg x="237.0" y="421" width="30" height="30" overflow="hidden"><rect x="8.2" y="8.4" width="7.5" height="4.7" fill="#fff"/><rect x="8.2" y="17.3" width="7.5" height="4.3" fill="#fff"/><path d="M14.8,3.8 L20.2,15 L14.8,26.2" fill="none" stroke="#fff" stroke-width="2.3" stroke-linejoin="miter"/></svg><text x="275" y="440.4" font-size="13.6" fill="#333" textLength="89.0" lengthAdjust="spacingAndGlyphs">manual trigger</text><rect x="392" y="431.0" width="10" height="10" rx="3" fill="#d9d9d9" stroke="#b0b0b0" stroke-width="1"/>
<rect x="277" y="381" width="120" height="30" rx="2.5" fill="#68cccb"/><path d="M307,381 h-27.5 a2.5,2.5 0 0 0 -2.5,2.5 v25 a2.5,2.5 0 0 0 2.5,2.5 h27.5 z" fill="#000" fill-opacity="0.06"/><svg x="277.0" y="381" width="30" height="30" overflow="hidden"><path d="M10.50,9.40 Q12.18,15.16 13.56,16.54 Q14.94,17.92 20.70,19.60 Q14.94,21.28 13.56,22.66 Q12.18,24.04 10.50,29.80 Q8.82,24.04 7.44,22.66 Q6.06,21.28 0.30,19.60 Q6.06,17.92 7.44,16.54 Q8.82,15.16 10.50,9.40 Z" fill="#fff"/><path d="M21.70,0.60 Q22.97,4.95 24.01,5.99 Q25.05,7.03 29.40,8.30 Q25.05,9.57 24.01,10.61 Q22.97,11.65 21.70,16.00 Q20.43,11.65 19.39,10.61 Q18.35,9.57 14.00,8.30 Q18.35,7.03 19.39,5.99 Q20.43,4.95 21.70,0.60 Z" fill="#fff"/></svg><text x="315" y="400.4" font-size="13.6" fill="#333" textLength="61.2" lengthAdjust="spacingAndGlyphs">GetEvents</text><rect x="392" y="391.0" width="10" height="10" rx="3" fill="#d9d9d9" stroke="#b0b0b0" stroke-width="1"/><rect x="286.2" y="414.2" width="8.6" height="8.6" rx="2" fill="#fff" stroke="#4a8ff0" stroke-width="2.6"/><text x="300.5" y="423" font-size="11.5" fill="#888" textLength="94.2" lengthAdjust="spacingAndGlyphs">Duration: 1671ms</text>
<rect x="657" y="343" width="26" height="26" rx="3" fill="#eeeeee"/><rect x="662" y="347" width="16" height="18" rx="2" fill="#c6e7c0"/><rect x="497" y="341" width="160" height="30" rx="2.5" fill="#c6e7c0"/><path d="M627,341 h27.5 a2.5,2.5 0 0 1 2.5,2.5 v25 a2.5,2.5 0 0 1 -2.5,2.5 h-27.5 z" fill="#000" fill-opacity="0.06"/><svg x="627.0" y="341" width="30" height="30" overflow="hidden"><rect x="10" y="6.2" width="10" height="1.9" fill="#fff"/><rect x="10" y="10.2" width="10" height="1.9" fill="#fff"/><rect x="10" y="14.2" width="10" height="1.9" fill="#fff"/><rect x="10" y="18.2" width="10" height="1.9" fill="#fff"/><rect x="10" y="22.2" width="10" height="1.9" fill="#fff"/></svg><text x="619" y="360.4" text-anchor="end" font-size="13.6" fill="#333" textLength="82.6" lengthAdjust="spacingAndGlyphs">debug output</text><rect x="492" y="351.0" width="10" height="10" rx="3" fill="#d9d9d9" stroke="#b0b0b0" stroke-width="1"/>
<rect x="497" y="381" width="140" height="30" rx="2.5" fill="#fdcb67"/><path d="M527,381 h-27.5 a2.5,2.5 0 0 0 -2.5,2.5 v25 a2.5,2.5 0 0 0 2.5,2.5 h27.5 z" fill="#000" fill-opacity="0.06"/><svg x="497.0" y="381" width="30" height="30" overflow="hidden"><path d="M15,5 L25.5,25 L4.5,25 z" fill="#fff" stroke="#fff" stroke-width="1.5" stroke-linejoin="round"/><rect x="13.6" y="10.6" width="3" height="7" fill="#f0b95a"/><rect x="13.6" y="19.3" width="3" height="2.7" fill="#f0b95a"/></svg><text x="535" y="400.4" font-size="13.6" fill="#333" textLength="64.6" lengthAdjust="spacingAndGlyphs">Get Events</text><rect x="492" y="391.0" width="10" height="10" rx="3" fill="#d9d9d9" stroke="#b0b0b0" stroke-width="1"/><rect x="632" y="391.0" width="10" height="10" rx="3" fill="#d9d9d9" stroke="#b0b0b0" stroke-width="1"/><rect x="506.2" y="414.2" width="8.6" height="8.6" rx="2" fill="#fff" stroke="#3f9f7d" stroke-width="2.6"/><text x="520.5" y="423" font-size="11.5" fill="#888" textLength="90.2" lengthAdjust="spacingAndGlyphs">Successfully read</text>
<rect x="777" y="381" width="100" height="30" rx="2.5" fill="#fdd0a2"/><path d="M807,381 h-27.5 a2.5,2.5 0 0 0 -2.5,2.5 v25 a2.5,2.5 0 0 0 2.5,2.5 h27.5 z" fill="#000" fill-opacity="0.06"/><svg x="777.0" y="381" width="30" height="30" overflow="hidden"><path d="M20.6,5.6 C18.8,3.6 16.6,4.8 16.3,8 L14.7,21.8 C14.4,24.8 12,25 9.8,23.6" fill="none" stroke="#fff" stroke-width="2.6" stroke-linecap="round"/><path d="M11,14.2 h9" stroke="#fff" stroke-width="2.4" stroke-linecap="butt"/></svg><text x="815" y="400.4" font-size="13.6" fill="#333" textLength="30.5" lengthAdjust="spacingAndGlyphs">Filter</text><rect x="772" y="391.0" width="10" height="10" rx="3" fill="#d9d9d9" stroke="#b0b0b0" stroke-width="1"/><rect x="872" y="391.0" width="10" height="10" rx="3" fill="#d9d9d9" stroke="#b0b0b0" stroke-width="1"/><rect x="786.2" y="414.2" width="8.6" height="8.6" rx="2" fill="#fff" stroke="#3f9f7d" stroke-width="2.6"/><text x="800.5" y="423" font-size="11.5" fill="#888" textLength="125.0" lengthAdjust="spacingAndGlyphs">Total duration: 11.66ms</text>
<rect x="977" y="381" width="140" height="30" rx="2.5" fill="#68cccb"/><path d="M1087,381 h27.5 a2.5,2.5 0 0 1 2.5,2.5 v25 a2.5,2.5 0 0 1 -2.5,2.5 h-27.5 z" fill="#000" fill-opacity="0.06"/><svg x="1087.0" y="381" width="30" height="30" overflow="hidden"><path d="M10.50,9.40 Q12.18,15.16 13.56,16.54 Q14.94,17.92 20.70,19.60 Q14.94,21.28 13.56,22.66 Q12.18,24.04 10.50,29.80 Q8.82,24.04 7.44,22.66 Q6.06,21.28 0.30,19.60 Q6.06,17.92 7.44,16.54 Q8.82,15.16 10.50,9.40 Z" fill="#fff"/><path d="M21.70,0.60 Q22.97,4.95 24.01,5.99 Q25.05,7.03 29.40,8.30 Q25.05,9.57 24.01,10.61 Q22.97,11.65 21.70,16.00 Q20.43,11.65 19.39,10.61 Q18.35,9.57 14.00,8.30 Q18.35,7.03 19.39,5.99 Q20.43,4.95 21.70,0.60 Z" fill="#fff"/></svg><text x="1079" y="400.4" text-anchor="end" font-size="13.6" fill="#333" textLength="82.3" lengthAdjust="spacingAndGlyphs">skill response</text><rect x="972" y="391.0" width="10" height="10" rx="3" fill="#d9d9d9" stroke="#b0b0b0" stroke-width="1"/>
<rect x="1137" y="423" width="26" height="26" rx="3" fill="#eeeeee"/><rect x="1142" y="427" width="16" height="18" rx="2" fill="#c6e7c0"/><rect x="977" y="421" width="160" height="30" rx="2.5" fill="#c6e7c0"/><path d="M1107,421 h27.5 a2.5,2.5 0 0 1 2.5,2.5 v25 a2.5,2.5 0 0 1 -2.5,2.5 h-27.5 z" fill="#000" fill-opacity="0.06"/><svg x="1107.0" y="421" width="30" height="30" overflow="hidden"><rect x="10" y="6.2" width="10" height="1.9" fill="#fff"/><rect x="10" y="10.2" width="10" height="1.9" fill="#fff"/><rect x="10" y="14.2" width="10" height="1.9" fill="#fff"/><rect x="10" y="18.2" width="10" height="1.9" fill="#fff"/><rect x="10" y="22.2" width="10" height="1.9" fill="#fff"/></svg><text x="1099" y="440.4" text-anchor="end" font-size="13.6" fill="#333" textLength="82.6" lengthAdjust="spacingAndGlyphs">debug output</text><rect x="972" y="431.0" width="10" height="10" rx="3" fill="#d9d9d9" stroke="#b0b0b0" stroke-width="1"/>
<rect x="894.5" y="486" width="26" height="26" rx="3" fill="#eeeeee"/><rect x="899.5" y="490" width="16" height="18" rx="2" fill="#c6e7c0"/><rect x="754.5" y="484" width="140" height="30" rx="2.5" fill="#c6e7c0"/><path d="M864.5,484 h27.5 a2.5,2.5 0 0 1 2.5,2.5 v25 a2.5,2.5 0 0 1 -2.5,2.5 h-27.5 z" fill="#000" fill-opacity="0.06"/><svg x="864.5" y="484" width="30" height="30" overflow="hidden"><rect x="10" y="6.2" width="10" height="1.9" fill="#fff"/><rect x="10" y="10.2" width="10" height="1.9" fill="#fff"/><rect x="10" y="14.2" width="10" height="1.9" fill="#fff"/><rect x="10" y="18.2" width="10" height="1.9" fill="#fff"/><rect x="10" y="22.2" width="10" height="1.9" fill="#fff"/></svg><text x="856.5" y="503.4" text-anchor="end" font-size="13.6" fill="#333" textLength="76.7" lengthAdjust="spacingAndGlyphs">msg.payload</text><rect x="749.5" y="494.0" width="10" height="10" rx="3" fill="#d9d9d9" stroke="#b0b0b0" stroke-width="1"/>
<rect x="257" y="521" width="140" height="30" rx="2.5" fill="#dddddd"/><path d="M287,521 h-27.5 a2.5,2.5 0 0 0 -2.5,2.5 v25 a2.5,2.5 0 0 0 2.5,2.5 h27.5 z" fill="#000" fill-opacity="0.06"/><svg x="257.0" y="521" width="30" height="30" overflow="hidden"><ellipse cx="15" cy="13.5" rx="8.5" ry="5.5" fill="#fff"/><path d="M10,17 L7.5,22.5 L14,18.5 z" fill="#fff"/></svg><text x="295" y="540.4" font-size="13.6" fill="#333" textLength="82.7" lengthAdjust="spacingAndGlyphs">GetCases skill</text>
<rect x="277" y="561" width="120" height="30" rx="2.5" fill="#68cccb"/><path d="M307,561 h-27.5 a2.5,2.5 0 0 0 -2.5,2.5 v25 a2.5,2.5 0 0 0 2.5,2.5 h27.5 z" fill="#000" fill-opacity="0.06"/><svg x="277.0" y="561" width="30" height="30" overflow="hidden"><path d="M10.50,9.40 Q12.18,15.16 13.56,16.54 Q14.94,17.92 20.70,19.60 Q14.94,21.28 13.56,22.66 Q12.18,24.04 10.50,29.80 Q8.82,24.04 7.44,22.66 Q6.06,21.28 0.30,19.60 Q6.06,17.92 7.44,16.54 Q8.82,15.16 10.50,9.40 Z" fill="#fff"/><path d="M21.70,0.60 Q22.97,4.95 24.01,5.99 Q25.05,7.03 29.40,8.30 Q25.05,9.57 24.01,10.61 Q22.97,11.65 21.70,16.00 Q20.43,11.65 19.39,10.61 Q18.35,9.57 14.00,8.30 Q18.35,7.03 19.39,5.99 Q20.43,4.95 21.70,0.60 Z" fill="#fff"/></svg><text x="315" y="580.4" font-size="13.6" fill="#333" textLength="56.5" lengthAdjust="spacingAndGlyphs">GetCases</text><rect x="392" y="571.0" width="10" height="10" rx="3" fill="#d9d9d9" stroke="#b0b0b0" stroke-width="1"/>
<rect x="212" y="603" width="25" height="26" rx="3" fill="#eeeeee"/><rect x="217" y="607" width="16" height="18" rx="2" fill="#c2deee"/><rect x="237" y="601" width="160" height="30" rx="2.5" fill="#c2deee"/><path d="M267,601 h-27.5 a2.5,2.5 0 0 0 -2.5,2.5 v25 a2.5,2.5 0 0 0 2.5,2.5 h27.5 z" fill="#000" fill-opacity="0.06"/><svg x="237.0" y="601" width="30" height="30" overflow="hidden"><rect x="8.2" y="8.4" width="7.5" height="4.7" fill="#fff"/><rect x="8.2" y="17.3" width="7.5" height="4.3" fill="#fff"/><path d="M14.8,3.8 L20.2,15 L14.8,26.2" fill="none" stroke="#fff" stroke-width="2.3" stroke-linejoin="miter"/></svg><text x="275" y="620.4" font-size="13.6" fill="#333" textLength="89.0" lengthAdjust="spacingAndGlyphs">manual trigger</text><rect x="392" y="611.0" width="10" height="10" rx="3" fill="#d9d9d9" stroke="#b0b0b0" stroke-width="1"/>
<rect x="657" y="543" width="26" height="26" rx="3" fill="#eeeeee"/><rect x="662" y="547" width="16" height="18" rx="2" fill="#c6e7c0"/><rect x="497" y="541" width="160" height="30" rx="2.5" fill="#c6e7c0"/><path d="M627,541 h27.5 a2.5,2.5 0 0 1 2.5,2.5 v25 a2.5,2.5 0 0 1 -2.5,2.5 h-27.5 z" fill="#000" fill-opacity="0.06"/><svg x="627.0" y="541" width="30" height="30" overflow="hidden"><rect x="10" y="6.2" width="10" height="1.9" fill="#fff"/><rect x="10" y="10.2" width="10" height="1.9" fill="#fff"/><rect x="10" y="14.2" width="10" height="1.9" fill="#fff"/><rect x="10" y="18.2" width="10" height="1.9" fill="#fff"/><rect x="10" y="22.2" width="10" height="1.9" fill="#fff"/></svg><text x="619" y="560.4" text-anchor="end" font-size="13.6" fill="#333" textLength="82.6" lengthAdjust="spacingAndGlyphs">debug output</text><rect x="492" y="551.0" width="10" height="10" rx="3" fill="#d9d9d9" stroke="#b0b0b0" stroke-width="1"/>
<rect x="497" y="581" width="120" height="30" rx="2.5" fill="#fca8a9"/><path d="M527,581 h-27.5 a2.5,2.5 0 0 0 -2.5,2.5 v25 a2.5,2.5 0 0 0 2.5,2.5 h27.5 z" fill="#000" fill-opacity="0.06"/><svg x="497.0" y="581" width="30" height="30" overflow="hidden"><g fill="none" stroke="#fff" stroke-width="1.5" stroke-linejoin="round"><path d="M10,9.0 l5.5,-3 l5.5,3 l-5.5,3 z M10,9.0 v5.5 l5.5,3 v-5.5 M21,9.0 v5.5 l-5.5,3"/><path d="M5.5,17.0 l5.5,-3 l5.5,3 l-5.5,3 z M5.5,17.0 v5.5 l5.5,3 v-5.5 M16.5,17.0 v5.5 l-5.5,3"/><path d="M14.5,17.0 l5.5,-3 l5.5,3 l-5.5,3 z M14.5,17.0 v5.5 l5.5,3 v-5.5 M25.5,17.0 v5.5 l-5.5,3"/></g></svg><text x="535" y="600.4" font-size="13.6" fill="#333" textLength="57.9" lengthAdjust="spacingAndGlyphs">Get cases</text><rect x="492" y="591.0" width="10" height="10" rx="3" fill="#d9d9d9" stroke="#b0b0b0" stroke-width="1"/><rect x="612" y="591.0" width="10" height="10" rx="3" fill="#d9d9d9" stroke="#b0b0b0" stroke-width="1"/>
<rect x="637" y="581" width="100" height="30" rx="2.5" fill="#fdd0a2"/><path d="M667,581 h-27.5 a2.5,2.5 0 0 0 -2.5,2.5 v25 a2.5,2.5 0 0 0 2.5,2.5 h27.5 z" fill="#000" fill-opacity="0.06"/><svg x="637.0" y="581" width="30" height="30" overflow="hidden"><path d="M20.6,5.6 C18.8,3.6 16.6,4.8 16.3,8 L14.7,21.8 C14.4,24.8 12,25 9.8,23.6" fill="none" stroke="#fff" stroke-width="2.6" stroke-linecap="round"/><path d="M11,14.2 h9" stroke="#fff" stroke-width="2.4" stroke-linecap="butt"/></svg><text x="675" y="600.4" font-size="13.6" fill="#333" textLength="30.5" lengthAdjust="spacingAndGlyphs">Filter</text><rect x="632" y="591.0" width="10" height="10" rx="3" fill="#d9d9d9" stroke="#b0b0b0" stroke-width="1"/><rect x="732" y="591.0" width="10" height="10" rx="3" fill="#d9d9d9" stroke="#b0b0b0" stroke-width="1"/>
<rect x="777" y="581" width="140" height="30" rx="2.5" fill="#68cccb"/><path d="M887,581 h27.5 a2.5,2.5 0 0 1 2.5,2.5 v25 a2.5,2.5 0 0 1 -2.5,2.5 h-27.5 z" fill="#000" fill-opacity="0.06"/><svg x="887.0" y="581" width="30" height="30" overflow="hidden"><path d="M10.50,9.40 Q12.18,15.16 13.56,16.54 Q14.94,17.92 20.70,19.60 Q14.94,21.28 13.56,22.66 Q12.18,24.04 10.50,29.80 Q8.82,24.04 7.44,22.66 Q6.06,21.28 0.30,19.60 Q6.06,17.92 7.44,16.54 Q8.82,15.16 10.50,9.40 Z" fill="#fff"/><path d="M21.70,0.60 Q22.97,4.95 24.01,5.99 Q25.05,7.03 29.40,8.30 Q25.05,9.57 24.01,10.61 Q22.97,11.65 21.70,16.00 Q20.43,11.65 19.39,10.61 Q18.35,9.57 14.00,8.30 Q18.35,7.03 19.39,5.99 Q20.43,4.95 21.70,0.60 Z" fill="#fff"/></svg><text x="879" y="600.4" text-anchor="end" font-size="13.6" fill="#333" textLength="82.3" lengthAdjust="spacingAndGlyphs">skill response</text><rect x="772" y="591.0" width="10" height="10" rx="3" fill="#d9d9d9" stroke="#b0b0b0" stroke-width="1"/>
<rect x="937" y="623" width="26" height="26" rx="3" fill="#eeeeee"/><rect x="942" y="627" width="16" height="18" rx="2" fill="#c6e7c0"/><rect x="777" y="621" width="160" height="30" rx="2.5" fill="#c6e7c0"/><path d="M907,621 h27.5 a2.5,2.5 0 0 1 2.5,2.5 v25 a2.5,2.5 0 0 1 -2.5,2.5 h-27.5 z" fill="#000" fill-opacity="0.06"/><svg x="907.0" y="621" width="30" height="30" overflow="hidden"><rect x="10" y="6.2" width="10" height="1.9" fill="#fff"/><rect x="10" y="10.2" width="10" height="1.9" fill="#fff"/><rect x="10" y="14.2" width="10" height="1.9" fill="#fff"/><rect x="10" y="18.2" width="10" height="1.9" fill="#fff"/><rect x="10" y="22.2" width="10" height="1.9" fill="#fff"/></svg><text x="899" y="640.4" text-anchor="end" font-size="13.6" fill="#333" textLength="82.6" lengthAdjust="spacingAndGlyphs">debug output</text><rect x="772" y="631.0" width="10" height="10" rx="3" fill="#d9d9d9" stroke="#b0b0b0" stroke-width="1"/>
<rect x="217" y="721" width="180" height="30" rx="2.5" fill="#dddddd"/><path d="M247,721 h-27.5 a2.5,2.5 0 0 0 -2.5,2.5 v25 a2.5,2.5 0 0 0 2.5,2.5 h27.5 z" fill="#000" fill-opacity="0.06"/><svg x="217.0" y="721" width="30" height="30" overflow="hidden"><ellipse cx="15" cy="13.5" rx="8.5" ry="5.5" fill="#fff"/><path d="M10,17 L7.5,22.5 L14,18.5 z" fill="#fff"/></svg><text x="255" y="740.4" font-size="13.6" fill="#333" textLength="115.9" lengthAdjust="spacingAndGlyphs">GetEnergyCost skill</text>
<rect x="237" y="761" width="160" height="30" rx="2.5" fill="#68cccb"/><path d="M267,761 h-27.5 a2.5,2.5 0 0 0 -2.5,2.5 v25 a2.5,2.5 0 0 0 2.5,2.5 h27.5 z" fill="#000" fill-opacity="0.06"/><svg x="237.0" y="761" width="30" height="30" overflow="hidden"><path d="M10.50,9.40 Q12.18,15.16 13.56,16.54 Q14.94,17.92 20.70,19.60 Q14.94,21.28 13.56,22.66 Q12.18,24.04 10.50,29.80 Q8.82,24.04 7.44,22.66 Q6.06,21.28 0.30,19.60 Q6.06,17.92 7.44,16.54 Q8.82,15.16 10.50,9.40 Z" fill="#fff"/><path d="M21.70,0.60 Q22.97,4.95 24.01,5.99 Q25.05,7.03 29.40,8.30 Q25.05,9.57 24.01,10.61 Q22.97,11.65 21.70,16.00 Q20.43,11.65 19.39,10.61 Q18.35,9.57 14.00,8.30 Q18.35,7.03 19.39,5.99 Q20.43,4.95 21.70,0.60 Z" fill="#fff"/></svg><text x="275" y="780.4" font-size="13.6" fill="#333" textLength="89.6" lengthAdjust="spacingAndGlyphs">GetEnergyCost</text><rect x="392" y="771.0" width="10" height="10" rx="3" fill="#d9d9d9" stroke="#b0b0b0" stroke-width="1"/>
<rect x="212" y="803" width="25" height="26" rx="3" fill="#eeeeee"/><rect x="217" y="807" width="16" height="18" rx="2" fill="#c2deee"/><rect x="237" y="801" width="160" height="30" rx="2.5" fill="#c2deee"/><path d="M267,801 h-27.5 a2.5,2.5 0 0 0 -2.5,2.5 v25 a2.5,2.5 0 0 0 2.5,2.5 h27.5 z" fill="#000" fill-opacity="0.06"/><svg x="237.0" y="801" width="30" height="30" overflow="hidden"><rect x="8.2" y="8.4" width="7.5" height="4.7" fill="#fff"/><rect x="8.2" y="17.3" width="7.5" height="4.3" fill="#fff"/><path d="M14.8,3.8 L20.2,15 L14.8,26.2" fill="none" stroke="#fff" stroke-width="2.3" stroke-linejoin="miter"/></svg><text x="275" y="820.4" font-size="13.6" fill="#333" textLength="89.0" lengthAdjust="spacingAndGlyphs">manual trigger</text><rect x="392" y="811.0" width="10" height="10" rx="3" fill="#d9d9d9" stroke="#b0b0b0" stroke-width="1"/>
<rect x="657" y="723" width="26" height="26" rx="3" fill="#eeeeee"/><rect x="662" y="727" width="16" height="18" rx="2" fill="#c6e7c0"/><rect x="497" y="721" width="160" height="30" rx="2.5" fill="#c6e7c0"/><path d="M627,721 h27.5 a2.5,2.5 0 0 1 2.5,2.5 v25 a2.5,2.5 0 0 1 -2.5,2.5 h-27.5 z" fill="#000" fill-opacity="0.06"/><svg x="627.0" y="721" width="30" height="30" overflow="hidden"><rect x="10" y="6.2" width="10" height="1.9" fill="#fff"/><rect x="10" y="10.2" width="10" height="1.9" fill="#fff"/><rect x="10" y="14.2" width="10" height="1.9" fill="#fff"/><rect x="10" y="18.2" width="10" height="1.9" fill="#fff"/><rect x="10" y="22.2" width="10" height="1.9" fill="#fff"/></svg><text x="619" y="740.4" text-anchor="end" font-size="13.6" fill="#333" textLength="82.6" lengthAdjust="spacingAndGlyphs">debug output</text><rect x="492" y="731.0" width="10" height="10" rx="3" fill="#d9d9d9" stroke="#b0b0b0" stroke-width="1"/>
<rect x="497" y="761" width="200" height="30" rx="2.5" fill="#fdd0a2"/><path d="M527,761 h-27.5 a2.5,2.5 0 0 0 -2.5,2.5 v25 a2.5,2.5 0 0 0 2.5,2.5 h27.5 z" fill="#000" fill-opacity="0.06"/><svg x="497.0" y="761" width="30" height="30" overflow="hidden"><path transform="translate(0,0.0)" d="M11.1,13.5 L12.5,11.5 L14.1,10.1 L15.8,8.1 L17.5,7.1 L20.2,7.2 L21.9,9.1 L23.6,12.5 L23.9,14.8 L22.6,16.5 L20.2,15.8 L18.9,16.8 L17.5,15.2 L15.8,14.1 L13.5,14.1 Z M9.8,15.8 L11.1,15 L16.2,14.8 L18.2,15.8 L19.9,17.5 L18.9,18.9 L17.8,20.9 L16.2,22.6 L14.1,22.4 L13.1,20.2 L12.5,18.2 L10.4,17.5 Z M8.1,9.6 L11.8,7.2 L11,8.6 L9,10 Z M10.8,9.6 L15.2,6.2 L14,8 L11.6,10 Z M6.2,16.8 L7.8,18.2 L7.6,19.6 L6.4,18.4 Z" fill="#fff" stroke="#fff" stroke-width="0.5" stroke-linejoin="round"/></svg><text x="535" y="780.4" font-size="13.6" fill="#333" textLength="130.5" lengthAdjust="spacingAndGlyphs">GET real market price</text><rect x="492" y="771.0" width="10" height="10" rx="3" fill="#d9d9d9" stroke="#b0b0b0" stroke-width="1"/><rect x="692" y="771.0" width="10" height="10" rx="3" fill="#d9d9d9" stroke="#b0b0b0" stroke-width="1"/>
<rect x="737" y="761" width="180" height="30" rx="2.5" fill="#fdd0a2"/><path d="M767,761 h-27.5 a2.5,2.5 0 0 0 -2.5,2.5 v25 a2.5,2.5 0 0 0 2.5,2.5 h27.5 z" fill="#000" fill-opacity="0.06"/><svg x="737.0" y="761" width="30" height="30" overflow="hidden"><path d="M20.6,5.6 C18.8,3.6 16.6,4.8 16.3,8 L14.7,21.8 C14.4,24.8 12,25 9.8,23.6" fill="none" stroke="#fff" stroke-width="2.6" stroke-linecap="round"/><path d="M11,14.2 h9" stroke="#fff" stroke-width="2.4" stroke-linecap="butt"/></svg><text x="775" y="780.4" font-size="13.6" fill="#333" textLength="122.2" lengthAdjust="spacingAndGlyphs">Extract market price</text><rect x="732" y="771.0" width="10" height="10" rx="3" fill="#d9d9d9" stroke="#b0b0b0" stroke-width="1"/><rect x="912" y="771.0" width="10" height="10" rx="3" fill="#d9d9d9" stroke="#b0b0b0" stroke-width="1"/>
<rect x="977" y="761" width="140" height="30" rx="2.5" fill="#68cccb"/><path d="M1087,761 h27.5 a2.5,2.5 0 0 1 2.5,2.5 v25 a2.5,2.5 0 0 1 -2.5,2.5 h-27.5 z" fill="#000" fill-opacity="0.06"/><svg x="1087.0" y="761" width="30" height="30" overflow="hidden"><path d="M10.50,9.40 Q12.18,15.16 13.56,16.54 Q14.94,17.92 20.70,19.60 Q14.94,21.28 13.56,22.66 Q12.18,24.04 10.50,29.80 Q8.82,24.04 7.44,22.66 Q6.06,21.28 0.30,19.60 Q6.06,17.92 7.44,16.54 Q8.82,15.16 10.50,9.40 Z" fill="#fff"/><path d="M21.70,0.60 Q22.97,4.95 24.01,5.99 Q25.05,7.03 29.40,8.30 Q25.05,9.57 24.01,10.61 Q22.97,11.65 21.70,16.00 Q20.43,11.65 19.39,10.61 Q18.35,9.57 14.00,8.30 Q18.35,7.03 19.39,5.99 Q20.43,4.95 21.70,0.60 Z" fill="#fff"/></svg><text x="1079" y="780.4" text-anchor="end" font-size="13.6" fill="#333" textLength="82.3" lengthAdjust="spacingAndGlyphs">skill response</text><rect x="972" y="771.0" width="10" height="10" rx="3" fill="#d9d9d9" stroke="#b0b0b0" stroke-width="1"/>
<rect x="1137" y="803" width="26" height="26" rx="3" fill="#eeeeee"/><rect x="1142" y="807" width="16" height="18" rx="2" fill="#c6e7c0"/><rect x="977" y="801" width="160" height="30" rx="2.5" fill="#c6e7c0"/><path d="M1107,801 h27.5 a2.5,2.5 0 0 1 2.5,2.5 v25 a2.5,2.5 0 0 1 -2.5,2.5 h-27.5 z" fill="#000" fill-opacity="0.06"/><svg x="1107.0" y="801" width="30" height="30" overflow="hidden"><rect x="10" y="6.2" width="10" height="1.9" fill="#fff"/><rect x="10" y="10.2" width="10" height="1.9" fill="#fff"/><rect x="10" y="14.2" width="10" height="1.9" fill="#fff"/><rect x="10" y="18.2" width="10" height="1.9" fill="#fff"/><rect x="10" y="22.2" width="10" height="1.9" fill="#fff"/></svg><text x="1099" y="820.4" text-anchor="end" font-size="13.6" fill="#333" textLength="82.6" lengthAdjust="spacingAndGlyphs">debug output</text><rect x="972" y="811.0" width="10" height="10" rx="3" fill="#d9d9d9" stroke="#b0b0b0" stroke-width="1"/>
</g></svg>
<rect x="1190" y="77" width="15" height="775" fill="#fafafa"/>
<rect x="177" y="852" width="1028" height="14" fill="#fafafa"/>
<path d="M1193.3,88 l4.35,-7 l4.35,7z" fill="#888"/><rect x="1193" y="94" width="9" height="116" rx="4.5" fill="#888"/><path d="M1193.3,841 l4.35,7 l4.35,-7z" fill="#888"/>
<path d="M188.8,855 l-7,4.5 l7,4.5z" fill="#888"/><rect x="195" y="855" width="198" height="9" rx="4.5" fill="#888"/><path d="M1178.3,855 l7,4.5 l-7,4.5z" fill="#888"/>
<rect x="177" y="866" width="1028" height="26" fill="#f3f3f3"/><rect x="177" y="866" width="1028" height="1" fill="#cfcfcf"/>
<rect x="1128.5" y="870.5" width="18" height="18" fill="#fff" stroke="#ccc"/>
<rect x="1152.5" y="870.5" width="18" height="18" fill="#fff" stroke="#ccc"/>
<rect x="1176.5" y="870.5" width="18" height="18" fill="#fff" stroke="#ccc"/>
<rect x="1132.8" y="878.3" width="9.8" height="2.4" fill="#666"/>
<circle cx="1161.4" cy="879.5" r="4.9" fill="none" stroke="#666" stroke-width="1.6"/>
<path d="M1180.5,879.5 h10 M1185.5,874.5 v10" stroke="#666" stroke-width="2.4"/>
<rect x="1205" y="41" width="8" height="851" fill="#f3f3f3"/><rect x="1205" y="41" width="1" height="851" fill="#cfcfcf"/><rect x="1213" y="41" width="1" height="851" fill="#cfcfcf"/>
<rect x="1208" y="442" width="3" height="50" fill="#cccccc"/>
<rect x="1214" y="41" width="397" height="851" fill="#fff"/>
<rect x="1214" y="74" width="150" height="2" fill="#0b4b56"/>
<g transform="translate(1265.8,57.5) scale(1.0)" fill="#777"><ellipse cx="0" cy="-4.3" rx="2.6" ry="1.8"/><path d="M-4,-2.2 h8 v4.2 a4,4.3 0 0 1 -8,0z"/><path d="M-4.2,-1 l-2.3,-1.8 M4.2,-1 l2.3,-1.8 M-4.4,1.6 h-2.6 M4.4,1.6 h2.6 M-4,3.8 l-2.3,2 M4,3.8 l2.3,2" stroke="#777" stroke-width="1.3"/><rect x="-0.5" y="-2" width="1" height="8" fill="#fff"/></g>
<text x="1280" y="63" font-size="13.6" font-weight="bold" fill="#333"{TLW(40.6)}>debug</text>
<rect x="1445" y="45" width="28" height="28" fill="#eeeeee"/>
<rect x="1479" y="45" width="28" height="28" fill="#eeeeee"/>
<rect x="1513" y="45" width="28" height="28" fill="#eeeeee"/>
<rect x="1581" y="45" width="28" height="28" fill="#eeeeee"/>
<circle cx="1459" cy="52.5" r="1.6" fill="#777"/><path d="M1456.3,55.3 h3.8 v6.3 h1.4 v2.1 h-5.2 v-2.1 h1.3 v-4.2 h-1.3z" fill="#777"/>
<path d="M1487.5,62.5 l2.7,-9.5 h9.5 l-2.7,9.5z" fill="#777"/><path d="M1487.5,62.5 q-0.5,1.5 1,1.5 h8.8 l2.7,-9.5" fill="none" stroke="#777" stroke-width="1"/><rect x="1491.5" y="55.5" width="5" height="1" fill="#eee"/>
<path d="M1518.8,52.3 v11.8 h15.2" fill="none" stroke="#777" stroke-width="1.1"/>
<rect x="1521.5" y="59" width="1.6" height="4" fill="#777"/>
<rect x="1524.4" y="56" width="1.6" height="7" fill="#777"/>
<rect x="1527.3" y="58" width="1.6" height="5" fill="#777"/>
<rect x="1530.2" y="54" width="1.6" height="9" fill="#777"/>
<g transform="translate(1561,58) scale(1.0)" fill="#777"><ellipse cx="0" cy="-4.3" rx="2.6" ry="1.8"/><path d="M-4,-2.2 h8 v4.2 a4,4.3 0 0 1 -8,0z"/><path d="M-4.2,-1 l-2.3,-1.8 M4.2,-1 l2.3,-1.8 M-4.4,1.6 h-2.6 M4.4,1.6 h2.6 M-4,3.8 l-2.3,2 M4,3.8 l2.3,2" stroke="#777" stroke-width="1.3"/><rect x="-0.5" y="-2" width="1" height="8" fill="#fff"/></g>
<path d="M1590.7,57.6 h8.8 l-4.4,4.4z" fill="#888"/>
<rect x="1231.7" y="90" width="4.2" height="10.8" fill="#777"/><rect x="1238.8" y="90" width="4.2" height="10.8" fill="#777"/>
<path d="M1503.6,90.7 h10 l-3.9,4.5 v5.8 l-2.2,-1.4 v-4.4z" fill="#777"/>
<text x="1517" y="100" font-size="12.5" fill="#888"{TLW(50)}>all nodes</text>
<rect x="1584" y="91.6" width="10" height="1.5" fill="#777"/><rect x="1587" y="90" width="4" height="2" fill="#777"/><path d="M1585,93.5 h8 l-0.7,7.2 h-6.6z" fill="#777"/><path d="M1587.3,95 v4.2 M1589,95 v4.2 M1590.7,95 v4.2" stroke="#eee" stroke-width="0.7"/>
<rect x="1214" y="115" width="397" height="1" fill="#d6d6d6"/>
<rect x="1214" y="119" width="383" height="464" fill="#eeeeee"/>
<rect x="1597" y="116" width="14" height="671" fill="#f8f8f8"/>
<path d="M1599.5,129.5 l4.8,-7 l4.8,7z" fill="#888"/><path d="M1599.5,776.5 l4.8,7 l4.8,-7z" fill="#888"/>
<rect x="1222" y="119" width="367" height="71" fill="#fff"/>
<text x="1225" y="135" font-size="11.3" fill="#777" textLength="122.6" lengthAdjust="spacingAndGlyphs">7.10.2025, 00:40:32.179</text>
<text x="1358.8" y="135" font-size="11" fill="#777" textLength="95.8" lengthAdjust="spacingAndGlyphs">node: debug output</text>
<text x="1225" y="155" font-size="11" fill="#aa6666" textLength="57.2" lengthAdjust="spacingAndGlyphs">msg: Object</text>
<text x="1228.5" y="180" font-size="12.4" fill="#333" style="font-family:'Liberation Mono', monospace" textLength="62.5" lengthAdjust="spacingAndGlyphs">{ <tspan font-style="italic" fill="#555">empty</tspan> }</text>
<rect x="1222" y="190" width="367" height="1" fill="#e6e6e6"/>
<rect x="1222" y="191" width="367" height="71" fill="#fff"/>
<text x="1225" y="207" font-size="11.3" fill="#777" textLength="122.6" lengthAdjust="spacingAndGlyphs">7.10.2025, 00:40:32.335</text>
<text x="1358.8" y="207" font-size="11" fill="#777" textLength="95.8" lengthAdjust="spacingAndGlyphs">node: debug output</text>
<text x="1225" y="227" font-size="11" fill="#aa6666" textLength="71.9" lengthAdjust="spacingAndGlyphs">msg: string[11]</text>
<text x="1228.5" y="251" font-size="12.4" fill="#b72b2b" style="font-family:'Liberation Mono', monospace" textLength="90.2" lengthAdjust="spacingAndGlyphs">"234 Eur/MWh"</text>
<rect x="1222" y="262" width="367" height="1" fill="#e6e6e6"/>
<rect x="1222" y="263" width="367" height="71" fill="#fff"/>
<text x="1225" y="279" font-size="11.3" fill="#777" textLength="122.6" lengthAdjust="spacingAndGlyphs">7.10.2025, 00:40:36.518</text>
<text x="1358.8" y="279" font-size="11" fill="#777" textLength="95.8" lengthAdjust="spacingAndGlyphs">node: debug output</text>
<text x="1225" y="299" font-size="11" fill="#aa6666" textLength="57.2" lengthAdjust="spacingAndGlyphs">msg: Object</text>
<text x="1228.5" y="324" font-size="12.4" fill="#333" style="font-family:'Liberation Mono', monospace" textLength="62.5" lengthAdjust="spacingAndGlyphs">{ <tspan font-style="italic" fill="#555">empty</tspan> }</text>
<rect x="1222" y="334" width="367" height="1" fill="#e6e6e6"/>
<rect x="1222" y="335" width="367" height="71" fill="#fff"/>
<text x="1225" y="351" font-size="11.3" fill="#777" textLength="122.6" lengthAdjust="spacingAndGlyphs">7.10.2025, 00:40:36.624</text>
<text x="1358.8" y="351" font-size="11" fill="#777" textLength="95.8" lengthAdjust="spacingAndGlyphs">node: debug output</text>
<text x="1225" y="371" font-size="11" fill="#aa6666" textLength="57.2" lengthAdjust="spacingAndGlyphs">msg: Object</text>
<text x="1228.5" y="396" font-size="12.4" fill="#333" style="font-family:'Liberation Mono', monospace" textLength="62.5" lengthAdjust="spacingAndGlyphs">{ <tspan font-style="italic" fill="#555">empty</tspan> }</text>
<rect x="1222" y="406" width="367" height="1" fill="#e6e6e6"/>
<rect x="1222" y="407" width="367" height="104" fill="#fff"/>
<text x="1225" y="423" font-size="11.3" fill="#777" textLength="122.6" lengthAdjust="spacingAndGlyphs">7.10.2025, 00:40:37.368</text>
<text x="1358.8" y="423" font-size="11" fill="#777" textLength="95.8" lengthAdjust="spacingAndGlyphs">node: debug output</text>
<text x="1225" y="443" font-size="11" fill="#aa6666" textLength="318.9" lengthAdjust="spacingAndGlyphs">cde125606a8a46e1bff0a26af6e9b520/status/health: msg: array[3]</text>
<path d="M1232.2,458.5 l4.6,4.3 l-4.6,4.3z" fill="#777"/>
<text x="1242" y="467" font-size="12.4" fill="#b72b2b" style="font-family:'Liberation Mono', monospace" textLength="131.9" lengthAdjust="spacingAndGlyphs"><tspan fill="#333">[ </tspan>"Stencil printer: </text>
<rect x="1386" y="456" width="13" height="13" rx="2" fill="#4dba74"/><path d="M1389,462.8 l2.6,2.6 l4.6,-5.2" fill="none" stroke="#fff" stroke-width="1.6"/>
<text x="1416" y="467" font-size="12.4" fill="#b72b2b" style="font-family:'Liberation Mono', monospace" textLength="124.9" lengthAdjust="spacingAndGlyphs">Operationa…"<tspan fill="#333">, </tspan>"SPI</text>
<text x="1228" y="483.5" font-size="12.4" fill="#b72b2b" style="font-family:'Liberation Mono', monospace" textLength="55.5" lengthAdjust="spacingAndGlyphs">machine:</text>
<rect x="1309" y="473" width="13" height="13" rx="2" fill="#4dba74"/><path d="M1312,479.8 l2.6,2.6 l4.6,-5.2" fill="none" stroke="#fff" stroke-width="1.6"/>
<text x="1338.7" y="483.5" font-size="12.4" fill="#b72b2b" style="font-family:'Liberation Mono', monospace" textLength="187.4" lengthAdjust="spacingAndGlyphs">Operational"<tspan fill="#333">, </tspan>"SMT placing:</text>
<path d="M1557.5,474.5 l10,10 M1567.5,474.5 l-10,10" stroke="#e8455e" stroke-width="2.6" stroke-linecap="round"/>
<text x="1228" y="500" font-size="12.4" fill="#b72b2b" style="font-family:'Liberation Mono', monospace" textLength="55.5" lengthAdjust="spacingAndGlyphs">ERROR"<tspan fill="#333"> ]</tspan></text>
<rect x="1222" y="511" width="367" height="1" fill="#e6e6e6"/>
<rect x="1222" y="512" width="367" height="71" fill="#fff"/>
<text x="1225" y="528" font-size="11.3" fill="#777" textLength="122.6" lengthAdjust="spacingAndGlyphs">7.10.2025, 00:40:38.271</text>
<text x="1358.8" y="528" font-size="11" fill="#777" textLength="95.8" lengthAdjust="spacingAndGlyphs">node: debug output</text>
<text x="1225" y="548" font-size="11" fill="#aa6666" textLength="63.6" lengthAdjust="spacingAndGlyphs">msg: array[0]</text>
<text x="1228.5" y="573" font-size="12.4" fill="#333" style="font-family:'Liberation Mono', monospace" textLength="62.5" lengthAdjust="spacingAndGlyphs">[ <tspan font-style="italic" fill="#555">empty</tspan> ]</text>
<rect x="1214" y="583" width="383" height="1" fill="#e6e6e6"/>
<defs><filter id="sh" x="-20%" y="-20%" width="140%" height="140%"><feDropShadow dx="0" dy="-0.5" stdDeviation="1" flood-color="#000" flood-opacity="0.18"/></filter></defs>
<path d="M1611,303.5 h-20.5 a6,6 0 0 0 -6,6 v69.5 a6,6 0 0 0 6,6 h20.5z" fill="#f2f2f2" filter="url(#sh)"/>
<text transform="translate(1602.8,368.5) rotate(-90)" font-size="15.5" fill="#777">Copilot</text>
<rect x="1214" y="787" width="397" height="1" fill="#cfcfcf"/>
<text x="1224" y="813" font-size="13.4" font-weight="bold" fill="#333"{TLW(133)}>Used compute hours</text>
<rect x="1224" y="828" width="322" height="56" fill="#f2f2f2"/>
<rect x="1549" y="828" width="53" height="56" fill="#f2f2f2"/>
<text x="1240" y="851" font-size="20.5" font-weight="bold" fill="#222"{TLW(22.7)}>59</text>
<text x="1269" y="851" font-size="16" fill="#333"{TLW(46.4)}>of 192</text>
<text x="1240" y="871.5" font-size="14.5" fill="#333"{TLW(37)}>Hours</text>
<path d="M1566,849 h3 l2.6,10.5 h11 l2.4,-7.5 h-14.6" fill="none" stroke="#999" stroke-width="1.8" stroke-linejoin="round"/><path d="M1570.4,852 h14.6 l-2.4,7.5 h-10.2z" fill="#999"/><circle cx="1573" cy="863" r="1.7" fill="#999"/><circle cx="1582.5" cy="863" r="1.7" fill="#999"/>
</svg></body></html>
